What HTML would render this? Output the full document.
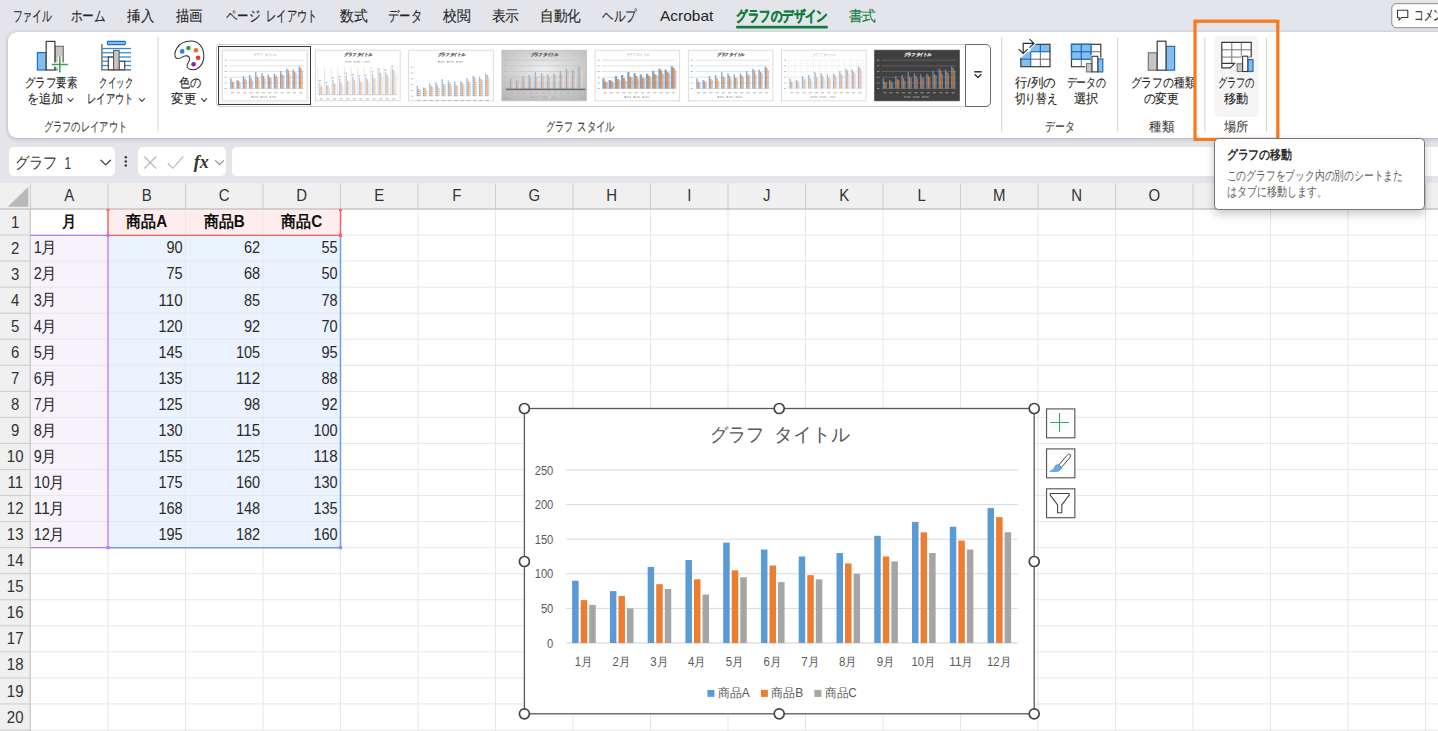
<!DOCTYPE html>
<html lang="ja">
<head>
<meta charset="utf-8">
<title>Excel - グラフの移動</title>
<style>
html,body{margin:0;padding:0;}
body{width:1438px;height:731px;overflow:hidden;background:#fff;font-family:"Liberation Sans",sans-serif;color:#242424;}
#app{position:relative;width:1438px;height:731px;overflow:hidden;background:#fff;}
.abs{position:absolute;}
#topbg{left:0;top:0;width:1438px;height:183px;background:#e4e5ea;}
#ribbon{left:8.3px;top:31.8px;width:1460px;height:106.2px;background:#fff;border-radius:9px;box-shadow:0 1px 4px rgba(0,0,0,0.22),0 0 1px rgba(0,0,0,0.12);}
.fbox{top:146.8px;height:28.8px;background:#fff;border-radius:5px;}
#namebox{left:8.9px;width:105.9px;}
#fbtns{left:137.7px;width:88.4px;}
#finput{left:232px;width:1230px;}
#gallery{left:216.4px;top:44.4px;width:749px;height:62.5px;background:#fff;border:1px solid #cfcfcf;border-right:none;border-radius:4px 0 0 4px;box-sizing:border-box;}
#galsel{left:218.3px;top:46.3px;width:93px;height:58.6px;box-sizing:border-box;border:1.4px solid #3a3a3a;background:#f7f7f7;}
#galbtn{left:965.4px;top:44.4px;width:25.5px;height:62.7px;box-sizing:border-box;border:1px solid #6a6a6a;border-radius:0 5px 5px 0;background:#fff;}
svg{position:absolute;left:0;top:0;overflow:hidden;}
svg text{font-family:"Liberation Sans",sans-serif;}
#tip{left:1214.1px;top:138.0px;width:211.1px;height:71.7px;box-sizing:border-box;background:#fff;border:1px solid #757575;border-radius:4.5px;box-shadow:0 4px 10px rgba(0,0,0,0.22);}
</style>
</head>
<body>
<div id="app">
<div id="topbg" class="abs"></div>
<div id="ribbon" class="abs"></div>
<div id="gallery" class="abs"></div>
<div id="galsel" class="abs"></div>
<div id="galbtn" class="abs"></div>
<div id="namebox" class="abs fbox"></div>
<div id="fbtns" class="abs fbox"></div>
<div id="finput" class="abs fbox"></div>
<svg id="gal" width="1438" height="731" viewBox="0 0 1438 731">
<defs><radialGradient id="g4" cx="50%" cy="38%" r="78%"><stop offset="0" stop-color="#f0f0f0"/><stop offset="1" stop-color="#b2b2b2"/></radialGradient></defs>
<rect x="222.3" y="50.2" width="84.6" height="50.6" fill="#fff" stroke="#d4d4d4" stroke-width="0.8"/>
<text x="253.1" y="55.6" font-size="3.4" fill="#8c8c8c" font-style="italic" textLength="23" lengthAdjust="spacingAndGlyphs" opacity="0.9">グラフ タイトル</text>
<line x1="229.3" y1="88.6" x2="303.9" y2="88.6" stroke="#d6d6d6" stroke-width="0.7"/>
<line x1="229.3" y1="82.92" x2="303.9" y2="82.92" stroke="#d6d6d6" stroke-width="0.7"/>
<line x1="229.3" y1="77.24" x2="303.9" y2="77.24" stroke="#d6d6d6" stroke-width="0.7"/>
<line x1="229.3" y1="71.56" x2="303.9" y2="71.56" stroke="#d6d6d6" stroke-width="0.7"/>
<line x1="229.3" y1="65.88" x2="303.9" y2="65.88" stroke="#d6d6d6" stroke-width="0.7"/>
<line x1="229.3" y1="60.2" x2="303.9" y2="60.2" stroke="#d6d6d6" stroke-width="0.7"/>
<rect x="230.28" y="78.38" width="1.35" height="10.22" fill="#5b9bd5" opacity="0.85"/>
<rect x="231.73" y="81.56" width="1.35" height="7.04" fill="#ed7d31" opacity="0.85"/>
<rect x="233.18" y="82.35" width="1.35" height="6.25" fill="#a5a5a5" opacity="0.6"/>
<rect x="236.5" y="80.08" width="1.35" height="8.52" fill="#5b9bd5" opacity="0.85"/>
<rect x="237.95" y="80.88" width="1.35" height="7.72" fill="#ed7d31" opacity="0.85"/>
<rect x="239.4" y="82.92" width="1.35" height="5.68" fill="#a5a5a5" opacity="0.6"/>
<rect x="242.72" y="76.1" width="1.35" height="12.5" fill="#5b9bd5" opacity="0.85"/>
<rect x="244.17" y="78.94" width="1.35" height="9.66" fill="#ed7d31" opacity="0.85"/>
<rect x="245.62" y="79.74" width="1.35" height="8.86" fill="#a5a5a5" opacity="0.6"/>
<rect x="248.93" y="74.97" width="1.35" height="13.63" fill="#5b9bd5" opacity="0.85"/>
<rect x="250.38" y="78.15" width="1.35" height="10.45" fill="#ed7d31" opacity="0.85"/>
<rect x="251.83" y="80.65" width="1.35" height="7.95" fill="#a5a5a5" opacity="0.6"/>
<rect x="255.15" y="72.13" width="1.35" height="16.47" fill="#5b9bd5" opacity="0.85"/>
<rect x="256.6" y="76.67" width="1.35" height="11.93" fill="#ed7d31" opacity="0.85"/>
<rect x="258.05" y="77.81" width="1.35" height="10.79" fill="#a5a5a5" opacity="0.6"/>
<rect x="261.37" y="73.26" width="1.35" height="15.34" fill="#5b9bd5" opacity="0.85"/>
<rect x="262.82" y="75.88" width="1.35" height="12.72" fill="#ed7d31" opacity="0.85"/>
<rect x="264.27" y="78.6" width="1.35" height="10" fill="#a5a5a5" opacity="0.6"/>
<rect x="267.58" y="74.4" width="1.35" height="14.2" fill="#5b9bd5" opacity="0.85"/>
<rect x="269.03" y="77.47" width="1.35" height="11.13" fill="#ed7d31" opacity="0.85"/>
<rect x="270.48" y="78.15" width="1.35" height="10.45" fill="#a5a5a5" opacity="0.6"/>
<rect x="273.8" y="73.83" width="1.35" height="14.77" fill="#5b9bd5" opacity="0.85"/>
<rect x="275.25" y="75.54" width="1.35" height="13.06" fill="#ed7d31" opacity="0.85"/>
<rect x="276.7" y="77.24" width="1.35" height="11.36" fill="#a5a5a5" opacity="0.6"/>
<rect x="280.02" y="70.99" width="1.35" height="17.61" fill="#5b9bd5" opacity="0.85"/>
<rect x="281.47" y="74.4" width="1.35" height="14.2" fill="#ed7d31" opacity="0.85"/>
<rect x="282.92" y="75.2" width="1.35" height="13.4" fill="#a5a5a5" opacity="0.6"/>
<rect x="286.23" y="68.72" width="1.35" height="19.88" fill="#5b9bd5" opacity="0.85"/>
<rect x="287.68" y="70.42" width="1.35" height="18.18" fill="#ed7d31" opacity="0.85"/>
<rect x="289.13" y="73.83" width="1.35" height="14.77" fill="#a5a5a5" opacity="0.6"/>
<rect x="292.45" y="69.52" width="1.35" height="19.08" fill="#5b9bd5" opacity="0.85"/>
<rect x="293.9" y="71.79" width="1.35" height="16.81" fill="#ed7d31" opacity="0.85"/>
<rect x="295.35" y="73.26" width="1.35" height="15.34" fill="#a5a5a5" opacity="0.6"/>
<rect x="298.67" y="66.45" width="1.35" height="22.15" fill="#5b9bd5" opacity="0.85"/>
<rect x="300.12" y="67.92" width="1.35" height="20.68" fill="#ed7d31" opacity="0.85"/>
<rect x="301.57" y="70.42" width="1.35" height="18.18" fill="#a5a5a5" opacity="0.6"/>
<rect x="230.91" y="92.3" width="3" height="1" fill="#b5b5b5"/>
<rect x="237.12" y="92.3" width="3" height="1" fill="#b5b5b5"/>
<rect x="243.34" y="92.3" width="3" height="1" fill="#b5b5b5"/>
<rect x="249.56" y="92.3" width="3" height="1" fill="#b5b5b5"/>
<rect x="255.77" y="92.3" width="3" height="1" fill="#b5b5b5"/>
<rect x="261.99" y="92.3" width="3" height="1" fill="#b5b5b5"/>
<rect x="268.21" y="92.3" width="3" height="1" fill="#b5b5b5"/>
<rect x="274.43" y="92.3" width="3" height="1" fill="#b5b5b5"/>
<rect x="280.64" y="92.3" width="3" height="1" fill="#b5b5b5"/>
<rect x="286.86" y="92.3" width="3" height="1" fill="#b5b5b5"/>
<rect x="293.07" y="92.3" width="3" height="1" fill="#b5b5b5"/>
<rect x="299.29" y="92.3" width="3" height="1" fill="#b5b5b5"/>
<rect x="224.5" y="88.2" width="2.6" height="0.8" fill="#b5b5b5"/>
<rect x="224.5" y="82.52" width="2.6" height="0.8" fill="#b5b5b5"/>
<rect x="224.5" y="76.84" width="2.6" height="0.8" fill="#b5b5b5"/>
<rect x="224.5" y="71.16" width="2.6" height="0.8" fill="#b5b5b5"/>
<rect x="224.5" y="65.48" width="2.6" height="0.8" fill="#b5b5b5"/>
<rect x="224.5" y="59.8" width="2.6" height="0.8" fill="#b5b5b5"/>
<rect x="251.6" y="96.3" width="1.6" height="1.4" fill="#5b9bd5"/>
<rect x="253.8" y="96.5" width="4.6" height="1" fill="#b5b5b5"/>
<rect x="260.6" y="96.3" width="1.6" height="1.4" fill="#ed7d31"/>
<rect x="262.8" y="96.5" width="4.6" height="1" fill="#b5b5b5"/>
<rect x="269.6" y="96.3" width="1.6" height="1.4" fill="#a5a5a5"/>
<rect x="271.8" y="96.5" width="4.6" height="1" fill="#b5b5b5"/>
<rect x="315.5" y="50.2" width="84.6" height="50.6" fill="#fff" stroke="#d4d4d4" stroke-width="0.8"/>
<text x="344.3" y="56.1" font-size="4.4" fill="#5a5a5a" font-weight="bold" stroke="#5a5a5a" stroke-width="0.12" font-style="italic" textLength="27" lengthAdjust="spacingAndGlyphs" opacity="0.9">グラフ タイトル</text>
<line x1="318" y1="67.2" x2="318" y2="94.7" stroke="#d9d9d9" stroke-width="0.6"/>
<line x1="324.59" y1="67.2" x2="324.59" y2="94.7" stroke="#d9d9d9" stroke-width="0.6"/>
<line x1="331.18" y1="67.2" x2="331.18" y2="94.7" stroke="#d9d9d9" stroke-width="0.6"/>
<line x1="337.77" y1="67.2" x2="337.77" y2="94.7" stroke="#d9d9d9" stroke-width="0.6"/>
<line x1="344.37" y1="67.2" x2="344.37" y2="94.7" stroke="#d9d9d9" stroke-width="0.6"/>
<line x1="350.96" y1="67.2" x2="350.96" y2="94.7" stroke="#d9d9d9" stroke-width="0.6"/>
<line x1="357.55" y1="67.2" x2="357.55" y2="94.7" stroke="#d9d9d9" stroke-width="0.6"/>
<line x1="364.14" y1="67.2" x2="364.14" y2="94.7" stroke="#d9d9d9" stroke-width="0.6"/>
<line x1="370.73" y1="67.2" x2="370.73" y2="94.7" stroke="#d9d9d9" stroke-width="0.6"/>
<line x1="377.33" y1="67.2" x2="377.33" y2="94.7" stroke="#d9d9d9" stroke-width="0.6"/>
<line x1="383.92" y1="67.2" x2="383.92" y2="94.7" stroke="#d9d9d9" stroke-width="0.6"/>
<line x1="390.51" y1="67.2" x2="390.51" y2="94.7" stroke="#d9d9d9" stroke-width="0.6"/>
<line x1="397.1" y1="67.2" x2="397.1" y2="94.7" stroke="#d9d9d9" stroke-width="0.6"/>
<line x1="318" y1="94.7" x2="397.1" y2="94.7" stroke="#bdbdbd" stroke-width="0.7"/>
<rect x="319.17" y="82.63" width="1.35" height="12.07" fill="#9dc3e6" opacity="0.85"/>
<rect x="318.57" y="80.03" width="2.2" height="1.2" fill="#a0a0a0" opacity="0.7"/>
<rect x="320.62" y="86.38" width="1.35" height="8.32" fill="#f4b183" opacity="0.85"/>
<rect x="322.07" y="87.32" width="1.35" height="7.38" fill="#dbdbdb" opacity="0.6"/>
<rect x="325.76" y="84.64" width="1.35" height="10.06" fill="#9dc3e6" opacity="0.85"/>
<rect x="325.16" y="82.04" width="2.2" height="1.2" fill="#a0a0a0" opacity="0.7"/>
<rect x="327.21" y="85.58" width="1.35" height="9.12" fill="#f4b183" opacity="0.85"/>
<rect x="328.66" y="87.99" width="1.35" height="6.71" fill="#dbdbdb" opacity="0.6"/>
<rect x="332.35" y="79.94" width="1.35" height="14.76" fill="#9dc3e6" opacity="0.85"/>
<rect x="331.75" y="77.34" width="2.2" height="1.2" fill="#a0a0a0" opacity="0.7"/>
<rect x="333.8" y="83.3" width="1.35" height="11.4" fill="#f4b183" opacity="0.85"/>
<rect x="335.25" y="84.24" width="1.35" height="10.46" fill="#dbdbdb" opacity="0.6"/>
<rect x="338.95" y="78.6" width="1.35" height="16.1" fill="#9dc3e6" opacity="0.85"/>
<rect x="338.35" y="76" width="2.2" height="1.2" fill="#a0a0a0" opacity="0.7"/>
<rect x="340.4" y="82.36" width="1.35" height="12.34" fill="#f4b183" opacity="0.85"/>
<rect x="341.85" y="85.31" width="1.35" height="9.39" fill="#dbdbdb" opacity="0.6"/>
<rect x="345.54" y="75.25" width="1.35" height="19.45" fill="#9dc3e6" opacity="0.85"/>
<rect x="344.94" y="72.65" width="2.2" height="1.2" fill="#a0a0a0" opacity="0.7"/>
<rect x="346.99" y="80.61" width="1.35" height="14.09" fill="#f4b183" opacity="0.85"/>
<rect x="348.44" y="81.96" width="1.35" height="12.74" fill="#dbdbdb" opacity="0.6"/>
<rect x="352.13" y="76.59" width="1.35" height="18.11" fill="#9dc3e6" opacity="0.85"/>
<rect x="351.53" y="73.99" width="2.2" height="1.2" fill="#a0a0a0" opacity="0.7"/>
<rect x="353.58" y="79.68" width="1.35" height="15.02" fill="#f4b183" opacity="0.85"/>
<rect x="355.03" y="82.9" width="1.35" height="11.8" fill="#dbdbdb" opacity="0.6"/>
<rect x="358.72" y="77.93" width="1.35" height="16.77" fill="#9dc3e6" opacity="0.85"/>
<rect x="358.12" y="75.33" width="2.2" height="1.2" fill="#a0a0a0" opacity="0.7"/>
<rect x="360.17" y="81.55" width="1.35" height="13.15" fill="#f4b183" opacity="0.85"/>
<rect x="361.62" y="82.36" width="1.35" height="12.34" fill="#dbdbdb" opacity="0.6"/>
<rect x="365.31" y="77.26" width="1.35" height="17.44" fill="#9dc3e6" opacity="0.85"/>
<rect x="364.71" y="74.66" width="2.2" height="1.2" fill="#a0a0a0" opacity="0.7"/>
<rect x="366.76" y="79.27" width="1.35" height="15.43" fill="#f4b183" opacity="0.85"/>
<rect x="368.21" y="81.29" width="1.35" height="13.41" fill="#dbdbdb" opacity="0.6"/>
<rect x="371.9" y="73.91" width="1.35" height="20.79" fill="#9dc3e6" opacity="0.85"/>
<rect x="371.3" y="71.31" width="2.2" height="1.2" fill="#a0a0a0" opacity="0.7"/>
<rect x="373.35" y="77.93" width="1.35" height="16.77" fill="#f4b183" opacity="0.85"/>
<rect x="374.8" y="78.87" width="1.35" height="15.83" fill="#dbdbdb" opacity="0.6"/>
<rect x="378.5" y="71.22" width="1.35" height="23.48" fill="#9dc3e6" opacity="0.85"/>
<rect x="377.9" y="68.62" width="2.2" height="1.2" fill="#a0a0a0" opacity="0.7"/>
<rect x="379.95" y="73.24" width="1.35" height="21.46" fill="#f4b183" opacity="0.85"/>
<rect x="381.4" y="77.26" width="1.35" height="17.44" fill="#dbdbdb" opacity="0.6"/>
<rect x="385.09" y="72.16" width="1.35" height="22.54" fill="#9dc3e6" opacity="0.85"/>
<rect x="384.49" y="69.56" width="2.2" height="1.2" fill="#a0a0a0" opacity="0.7"/>
<rect x="386.54" y="74.85" width="1.35" height="19.85" fill="#f4b183" opacity="0.85"/>
<rect x="387.99" y="76.59" width="1.35" height="18.11" fill="#dbdbdb" opacity="0.6"/>
<rect x="391.68" y="68.54" width="1.35" height="26.16" fill="#9dc3e6" opacity="0.85"/>
<rect x="391.08" y="65.94" width="2.2" height="1.2" fill="#a0a0a0" opacity="0.7"/>
<rect x="393.13" y="70.29" width="1.35" height="24.41" fill="#f4b183" opacity="0.85"/>
<rect x="394.58" y="73.24" width="1.35" height="21.46" fill="#dbdbdb" opacity="0.6"/>
<rect x="319.8" y="98.4" width="3" height="1" fill="#b5b5b5"/>
<rect x="326.39" y="98.4" width="3" height="1" fill="#b5b5b5"/>
<rect x="332.98" y="98.4" width="3" height="1" fill="#b5b5b5"/>
<rect x="339.57" y="98.4" width="3" height="1" fill="#b5b5b5"/>
<rect x="346.16" y="98.4" width="3" height="1" fill="#b5b5b5"/>
<rect x="352.75" y="98.4" width="3" height="1" fill="#b5b5b5"/>
<rect x="359.35" y="98.4" width="3" height="1" fill="#b5b5b5"/>
<rect x="365.94" y="98.4" width="3" height="1" fill="#b5b5b5"/>
<rect x="372.53" y="98.4" width="3" height="1" fill="#b5b5b5"/>
<rect x="379.12" y="98.4" width="3" height="1" fill="#b5b5b5"/>
<rect x="385.71" y="98.4" width="3" height="1" fill="#b5b5b5"/>
<rect x="392.3" y="98.4" width="3" height="1" fill="#b5b5b5"/>
<rect x="344.8" y="61.1" width="1.6" height="1.4" fill="#9dc3e6"/>
<rect x="347" y="61.3" width="4.6" height="1" fill="#b5b5b5"/>
<rect x="353.8" y="61.1" width="1.6" height="1.4" fill="#f4b183"/>
<rect x="356" y="61.3" width="4.6" height="1" fill="#b5b5b5"/>
<rect x="362.8" y="61.1" width="1.6" height="1.4" fill="#dbdbdb"/>
<rect x="365" y="61.3" width="4.6" height="1" fill="#b5b5b5"/>
<rect x="408.7" y="50.2" width="84.6" height="50.6" fill="#fff" stroke="#d4d4d4" stroke-width="0.8"/>
<text x="437.5" y="56.1" font-size="4.4" fill="#5a5a5a" font-weight="bold" stroke="#5a5a5a" stroke-width="0.12" font-style="italic" textLength="27" lengthAdjust="spacingAndGlyphs" opacity="0.9">グラフ タイトル</text>
<rect x="416.68" y="85.76" width="1.35" height="10.44" fill="#5b9bd5" opacity="0.85"/>
<line x1="416.58" y1="94.6" x2="418.13" y2="94.6" stroke="#fff" stroke-width="0.55"/>
<line x1="416.58" y1="92.4" x2="418.13" y2="92.4" stroke="#fff" stroke-width="0.55"/>
<line x1="416.58" y1="90.2" x2="418.13" y2="90.2" stroke="#fff" stroke-width="0.55"/>
<line x1="416.58" y1="88" x2="418.13" y2="88" stroke="#fff" stroke-width="0.55"/>
<line x1="416.58" y1="85.8" x2="418.13" y2="85.8" stroke="#fff" stroke-width="0.55"/>
<rect x="418.13" y="89.01" width="1.35" height="7.19" fill="#ed7d31" opacity="0.85"/>
<line x1="418.03" y1="94.6" x2="419.58" y2="94.6" stroke="#fff" stroke-width="0.55"/>
<line x1="418.03" y1="92.4" x2="419.58" y2="92.4" stroke="#fff" stroke-width="0.55"/>
<line x1="418.03" y1="90.2" x2="419.58" y2="90.2" stroke="#fff" stroke-width="0.55"/>
<rect x="419.58" y="89.82" width="1.35" height="6.38" fill="#a5a5a5" opacity="0.6"/>
<line x1="419.48" y1="94.6" x2="421.03" y2="94.6" stroke="#fff" stroke-width="0.55"/>
<line x1="419.48" y1="92.4" x2="421.03" y2="92.4" stroke="#fff" stroke-width="0.55"/>
<line x1="419.48" y1="90.2" x2="421.03" y2="90.2" stroke="#fff" stroke-width="0.55"/>
<rect x="422.9" y="87.5" width="1.35" height="8.7" fill="#5b9bd5" opacity="0.85"/>
<line x1="422.8" y1="94.6" x2="424.35" y2="94.6" stroke="#fff" stroke-width="0.55"/>
<line x1="422.8" y1="92.4" x2="424.35" y2="92.4" stroke="#fff" stroke-width="0.55"/>
<line x1="422.8" y1="90.2" x2="424.35" y2="90.2" stroke="#fff" stroke-width="0.55"/>
<line x1="422.8" y1="88" x2="424.35" y2="88" stroke="#fff" stroke-width="0.55"/>
<rect x="424.35" y="88.31" width="1.35" height="7.89" fill="#ed7d31" opacity="0.85"/>
<line x1="424.25" y1="94.6" x2="425.8" y2="94.6" stroke="#fff" stroke-width="0.55"/>
<line x1="424.25" y1="92.4" x2="425.8" y2="92.4" stroke="#fff" stroke-width="0.55"/>
<line x1="424.25" y1="90.2" x2="425.8" y2="90.2" stroke="#fff" stroke-width="0.55"/>
<rect x="425.8" y="90.4" width="1.35" height="5.8" fill="#a5a5a5" opacity="0.6"/>
<line x1="425.7" y1="94.6" x2="427.25" y2="94.6" stroke="#fff" stroke-width="0.55"/>
<line x1="425.7" y1="92.4" x2="427.25" y2="92.4" stroke="#fff" stroke-width="0.55"/>
<rect x="429.12" y="83.44" width="1.35" height="12.76" fill="#5b9bd5" opacity="0.85"/>
<line x1="429.02" y1="94.6" x2="430.57" y2="94.6" stroke="#fff" stroke-width="0.55"/>
<line x1="429.02" y1="92.4" x2="430.57" y2="92.4" stroke="#fff" stroke-width="0.55"/>
<line x1="429.02" y1="90.2" x2="430.57" y2="90.2" stroke="#fff" stroke-width="0.55"/>
<line x1="429.02" y1="88" x2="430.57" y2="88" stroke="#fff" stroke-width="0.55"/>
<line x1="429.02" y1="85.8" x2="430.57" y2="85.8" stroke="#fff" stroke-width="0.55"/>
<line x1="429.02" y1="83.6" x2="430.57" y2="83.6" stroke="#fff" stroke-width="0.55"/>
<rect x="430.57" y="86.34" width="1.35" height="9.86" fill="#ed7d31" opacity="0.85"/>
<line x1="430.47" y1="94.6" x2="432.02" y2="94.6" stroke="#fff" stroke-width="0.55"/>
<line x1="430.47" y1="92.4" x2="432.02" y2="92.4" stroke="#fff" stroke-width="0.55"/>
<line x1="430.47" y1="90.2" x2="432.02" y2="90.2" stroke="#fff" stroke-width="0.55"/>
<line x1="430.47" y1="88" x2="432.02" y2="88" stroke="#fff" stroke-width="0.55"/>
<rect x="432.02" y="87.15" width="1.35" height="9.05" fill="#a5a5a5" opacity="0.6"/>
<line x1="431.92" y1="94.6" x2="433.47" y2="94.6" stroke="#fff" stroke-width="0.55"/>
<line x1="431.92" y1="92.4" x2="433.47" y2="92.4" stroke="#fff" stroke-width="0.55"/>
<line x1="431.92" y1="90.2" x2="433.47" y2="90.2" stroke="#fff" stroke-width="0.55"/>
<line x1="431.92" y1="88" x2="433.47" y2="88" stroke="#fff" stroke-width="0.55"/>
<rect x="435.33" y="82.28" width="1.35" height="13.92" fill="#5b9bd5" opacity="0.85"/>
<line x1="435.23" y1="94.6" x2="436.78" y2="94.6" stroke="#fff" stroke-width="0.55"/>
<line x1="435.23" y1="92.4" x2="436.78" y2="92.4" stroke="#fff" stroke-width="0.55"/>
<line x1="435.23" y1="90.2" x2="436.78" y2="90.2" stroke="#fff" stroke-width="0.55"/>
<line x1="435.23" y1="88" x2="436.78" y2="88" stroke="#fff" stroke-width="0.55"/>
<line x1="435.23" y1="85.8" x2="436.78" y2="85.8" stroke="#fff" stroke-width="0.55"/>
<line x1="435.23" y1="83.6" x2="436.78" y2="83.6" stroke="#fff" stroke-width="0.55"/>
<rect x="436.78" y="85.53" width="1.35" height="10.67" fill="#ed7d31" opacity="0.85"/>
<line x1="436.68" y1="94.6" x2="438.23" y2="94.6" stroke="#fff" stroke-width="0.55"/>
<line x1="436.68" y1="92.4" x2="438.23" y2="92.4" stroke="#fff" stroke-width="0.55"/>
<line x1="436.68" y1="90.2" x2="438.23" y2="90.2" stroke="#fff" stroke-width="0.55"/>
<line x1="436.68" y1="88" x2="438.23" y2="88" stroke="#fff" stroke-width="0.55"/>
<line x1="436.68" y1="85.8" x2="438.23" y2="85.8" stroke="#fff" stroke-width="0.55"/>
<rect x="438.23" y="88.08" width="1.35" height="8.12" fill="#a5a5a5" opacity="0.6"/>
<line x1="438.13" y1="94.6" x2="439.68" y2="94.6" stroke="#fff" stroke-width="0.55"/>
<line x1="438.13" y1="92.4" x2="439.68" y2="92.4" stroke="#fff" stroke-width="0.55"/>
<line x1="438.13" y1="90.2" x2="439.68" y2="90.2" stroke="#fff" stroke-width="0.55"/>
<rect x="441.55" y="79.38" width="1.35" height="16.82" fill="#5b9bd5" opacity="0.85"/>
<line x1="441.45" y1="94.6" x2="443" y2="94.6" stroke="#fff" stroke-width="0.55"/>
<line x1="441.45" y1="92.4" x2="443" y2="92.4" stroke="#fff" stroke-width="0.55"/>
<line x1="441.45" y1="90.2" x2="443" y2="90.2" stroke="#fff" stroke-width="0.55"/>
<line x1="441.45" y1="88" x2="443" y2="88" stroke="#fff" stroke-width="0.55"/>
<line x1="441.45" y1="85.8" x2="443" y2="85.8" stroke="#fff" stroke-width="0.55"/>
<line x1="441.45" y1="83.6" x2="443" y2="83.6" stroke="#fff" stroke-width="0.55"/>
<line x1="441.45" y1="81.4" x2="443" y2="81.4" stroke="#fff" stroke-width="0.55"/>
<rect x="443" y="84.02" width="1.35" height="12.18" fill="#ed7d31" opacity="0.85"/>
<line x1="442.9" y1="94.6" x2="444.45" y2="94.6" stroke="#fff" stroke-width="0.55"/>
<line x1="442.9" y1="92.4" x2="444.45" y2="92.4" stroke="#fff" stroke-width="0.55"/>
<line x1="442.9" y1="90.2" x2="444.45" y2="90.2" stroke="#fff" stroke-width="0.55"/>
<line x1="442.9" y1="88" x2="444.45" y2="88" stroke="#fff" stroke-width="0.55"/>
<line x1="442.9" y1="85.8" x2="444.45" y2="85.8" stroke="#fff" stroke-width="0.55"/>
<rect x="444.45" y="85.18" width="1.35" height="11.02" fill="#a5a5a5" opacity="0.6"/>
<line x1="444.35" y1="94.6" x2="445.9" y2="94.6" stroke="#fff" stroke-width="0.55"/>
<line x1="444.35" y1="92.4" x2="445.9" y2="92.4" stroke="#fff" stroke-width="0.55"/>
<line x1="444.35" y1="90.2" x2="445.9" y2="90.2" stroke="#fff" stroke-width="0.55"/>
<line x1="444.35" y1="88" x2="445.9" y2="88" stroke="#fff" stroke-width="0.55"/>
<line x1="444.35" y1="85.8" x2="445.9" y2="85.8" stroke="#fff" stroke-width="0.55"/>
<rect x="447.77" y="80.54" width="1.35" height="15.66" fill="#5b9bd5" opacity="0.85"/>
<line x1="447.67" y1="94.6" x2="449.22" y2="94.6" stroke="#fff" stroke-width="0.55"/>
<line x1="447.67" y1="92.4" x2="449.22" y2="92.4" stroke="#fff" stroke-width="0.55"/>
<line x1="447.67" y1="90.2" x2="449.22" y2="90.2" stroke="#fff" stroke-width="0.55"/>
<line x1="447.67" y1="88" x2="449.22" y2="88" stroke="#fff" stroke-width="0.55"/>
<line x1="447.67" y1="85.8" x2="449.22" y2="85.8" stroke="#fff" stroke-width="0.55"/>
<line x1="447.67" y1="83.6" x2="449.22" y2="83.6" stroke="#fff" stroke-width="0.55"/>
<line x1="447.67" y1="81.4" x2="449.22" y2="81.4" stroke="#fff" stroke-width="0.55"/>
<rect x="449.22" y="83.21" width="1.35" height="12.99" fill="#ed7d31" opacity="0.85"/>
<line x1="449.12" y1="94.6" x2="450.67" y2="94.6" stroke="#fff" stroke-width="0.55"/>
<line x1="449.12" y1="92.4" x2="450.67" y2="92.4" stroke="#fff" stroke-width="0.55"/>
<line x1="449.12" y1="90.2" x2="450.67" y2="90.2" stroke="#fff" stroke-width="0.55"/>
<line x1="449.12" y1="88" x2="450.67" y2="88" stroke="#fff" stroke-width="0.55"/>
<line x1="449.12" y1="85.8" x2="450.67" y2="85.8" stroke="#fff" stroke-width="0.55"/>
<line x1="449.12" y1="83.6" x2="450.67" y2="83.6" stroke="#fff" stroke-width="0.55"/>
<rect x="450.67" y="85.99" width="1.35" height="10.21" fill="#a5a5a5" opacity="0.6"/>
<line x1="450.57" y1="94.6" x2="452.12" y2="94.6" stroke="#fff" stroke-width="0.55"/>
<line x1="450.57" y1="92.4" x2="452.12" y2="92.4" stroke="#fff" stroke-width="0.55"/>
<line x1="450.57" y1="90.2" x2="452.12" y2="90.2" stroke="#fff" stroke-width="0.55"/>
<line x1="450.57" y1="88" x2="452.12" y2="88" stroke="#fff" stroke-width="0.55"/>
<rect x="453.98" y="81.7" width="1.35" height="14.5" fill="#5b9bd5" opacity="0.85"/>
<line x1="453.88" y1="94.6" x2="455.43" y2="94.6" stroke="#fff" stroke-width="0.55"/>
<line x1="453.88" y1="92.4" x2="455.43" y2="92.4" stroke="#fff" stroke-width="0.55"/>
<line x1="453.88" y1="90.2" x2="455.43" y2="90.2" stroke="#fff" stroke-width="0.55"/>
<line x1="453.88" y1="88" x2="455.43" y2="88" stroke="#fff" stroke-width="0.55"/>
<line x1="453.88" y1="85.8" x2="455.43" y2="85.8" stroke="#fff" stroke-width="0.55"/>
<line x1="453.88" y1="83.6" x2="455.43" y2="83.6" stroke="#fff" stroke-width="0.55"/>
<rect x="455.43" y="84.83" width="1.35" height="11.37" fill="#ed7d31" opacity="0.85"/>
<line x1="455.33" y1="94.6" x2="456.88" y2="94.6" stroke="#fff" stroke-width="0.55"/>
<line x1="455.33" y1="92.4" x2="456.88" y2="92.4" stroke="#fff" stroke-width="0.55"/>
<line x1="455.33" y1="90.2" x2="456.88" y2="90.2" stroke="#fff" stroke-width="0.55"/>
<line x1="455.33" y1="88" x2="456.88" y2="88" stroke="#fff" stroke-width="0.55"/>
<line x1="455.33" y1="85.8" x2="456.88" y2="85.8" stroke="#fff" stroke-width="0.55"/>
<rect x="456.88" y="85.53" width="1.35" height="10.67" fill="#a5a5a5" opacity="0.6"/>
<line x1="456.78" y1="94.6" x2="458.33" y2="94.6" stroke="#fff" stroke-width="0.55"/>
<line x1="456.78" y1="92.4" x2="458.33" y2="92.4" stroke="#fff" stroke-width="0.55"/>
<line x1="456.78" y1="90.2" x2="458.33" y2="90.2" stroke="#fff" stroke-width="0.55"/>
<line x1="456.78" y1="88" x2="458.33" y2="88" stroke="#fff" stroke-width="0.55"/>
<line x1="456.78" y1="85.8" x2="458.33" y2="85.8" stroke="#fff" stroke-width="0.55"/>
<rect x="460.2" y="81.12" width="1.35" height="15.08" fill="#5b9bd5" opacity="0.85"/>
<line x1="460.1" y1="94.6" x2="461.65" y2="94.6" stroke="#fff" stroke-width="0.55"/>
<line x1="460.1" y1="92.4" x2="461.65" y2="92.4" stroke="#fff" stroke-width="0.55"/>
<line x1="460.1" y1="90.2" x2="461.65" y2="90.2" stroke="#fff" stroke-width="0.55"/>
<line x1="460.1" y1="88" x2="461.65" y2="88" stroke="#fff" stroke-width="0.55"/>
<line x1="460.1" y1="85.8" x2="461.65" y2="85.8" stroke="#fff" stroke-width="0.55"/>
<line x1="460.1" y1="83.6" x2="461.65" y2="83.6" stroke="#fff" stroke-width="0.55"/>
<line x1="460.1" y1="81.4" x2="461.65" y2="81.4" stroke="#fff" stroke-width="0.55"/>
<rect x="461.65" y="82.86" width="1.35" height="13.34" fill="#ed7d31" opacity="0.85"/>
<line x1="461.55" y1="94.6" x2="463.1" y2="94.6" stroke="#fff" stroke-width="0.55"/>
<line x1="461.55" y1="92.4" x2="463.1" y2="92.4" stroke="#fff" stroke-width="0.55"/>
<line x1="461.55" y1="90.2" x2="463.1" y2="90.2" stroke="#fff" stroke-width="0.55"/>
<line x1="461.55" y1="88" x2="463.1" y2="88" stroke="#fff" stroke-width="0.55"/>
<line x1="461.55" y1="85.8" x2="463.1" y2="85.8" stroke="#fff" stroke-width="0.55"/>
<line x1="461.55" y1="83.6" x2="463.1" y2="83.6" stroke="#fff" stroke-width="0.55"/>
<rect x="463.1" y="84.6" width="1.35" height="11.6" fill="#a5a5a5" opacity="0.6"/>
<line x1="463" y1="94.6" x2="464.55" y2="94.6" stroke="#fff" stroke-width="0.55"/>
<line x1="463" y1="92.4" x2="464.55" y2="92.4" stroke="#fff" stroke-width="0.55"/>
<line x1="463" y1="90.2" x2="464.55" y2="90.2" stroke="#fff" stroke-width="0.55"/>
<line x1="463" y1="88" x2="464.55" y2="88" stroke="#fff" stroke-width="0.55"/>
<line x1="463" y1="85.8" x2="464.55" y2="85.8" stroke="#fff" stroke-width="0.55"/>
<rect x="466.42" y="78.22" width="1.35" height="17.98" fill="#5b9bd5" opacity="0.85"/>
<line x1="466.32" y1="94.6" x2="467.87" y2="94.6" stroke="#fff" stroke-width="0.55"/>
<line x1="466.32" y1="92.4" x2="467.87" y2="92.4" stroke="#fff" stroke-width="0.55"/>
<line x1="466.32" y1="90.2" x2="467.87" y2="90.2" stroke="#fff" stroke-width="0.55"/>
<line x1="466.32" y1="88" x2="467.87" y2="88" stroke="#fff" stroke-width="0.55"/>
<line x1="466.32" y1="85.8" x2="467.87" y2="85.8" stroke="#fff" stroke-width="0.55"/>
<line x1="466.32" y1="83.6" x2="467.87" y2="83.6" stroke="#fff" stroke-width="0.55"/>
<line x1="466.32" y1="81.4" x2="467.87" y2="81.4" stroke="#fff" stroke-width="0.55"/>
<line x1="466.32" y1="79.2" x2="467.87" y2="79.2" stroke="#fff" stroke-width="0.55"/>
<rect x="467.87" y="81.7" width="1.35" height="14.5" fill="#ed7d31" opacity="0.85"/>
<line x1="467.77" y1="94.6" x2="469.32" y2="94.6" stroke="#fff" stroke-width="0.55"/>
<line x1="467.77" y1="92.4" x2="469.32" y2="92.4" stroke="#fff" stroke-width="0.55"/>
<line x1="467.77" y1="90.2" x2="469.32" y2="90.2" stroke="#fff" stroke-width="0.55"/>
<line x1="467.77" y1="88" x2="469.32" y2="88" stroke="#fff" stroke-width="0.55"/>
<line x1="467.77" y1="85.8" x2="469.32" y2="85.8" stroke="#fff" stroke-width="0.55"/>
<line x1="467.77" y1="83.6" x2="469.32" y2="83.6" stroke="#fff" stroke-width="0.55"/>
<rect x="469.32" y="82.51" width="1.35" height="13.69" fill="#a5a5a5" opacity="0.6"/>
<line x1="469.22" y1="94.6" x2="470.77" y2="94.6" stroke="#fff" stroke-width="0.55"/>
<line x1="469.22" y1="92.4" x2="470.77" y2="92.4" stroke="#fff" stroke-width="0.55"/>
<line x1="469.22" y1="90.2" x2="470.77" y2="90.2" stroke="#fff" stroke-width="0.55"/>
<line x1="469.22" y1="88" x2="470.77" y2="88" stroke="#fff" stroke-width="0.55"/>
<line x1="469.22" y1="85.8" x2="470.77" y2="85.8" stroke="#fff" stroke-width="0.55"/>
<line x1="469.22" y1="83.6" x2="470.77" y2="83.6" stroke="#fff" stroke-width="0.55"/>
<rect x="472.63" y="75.9" width="1.35" height="20.3" fill="#5b9bd5" opacity="0.85"/>
<line x1="472.53" y1="94.6" x2="474.08" y2="94.6" stroke="#fff" stroke-width="0.55"/>
<line x1="472.53" y1="92.4" x2="474.08" y2="92.4" stroke="#fff" stroke-width="0.55"/>
<line x1="472.53" y1="90.2" x2="474.08" y2="90.2" stroke="#fff" stroke-width="0.55"/>
<line x1="472.53" y1="88" x2="474.08" y2="88" stroke="#fff" stroke-width="0.55"/>
<line x1="472.53" y1="85.8" x2="474.08" y2="85.8" stroke="#fff" stroke-width="0.55"/>
<line x1="472.53" y1="83.6" x2="474.08" y2="83.6" stroke="#fff" stroke-width="0.55"/>
<line x1="472.53" y1="81.4" x2="474.08" y2="81.4" stroke="#fff" stroke-width="0.55"/>
<line x1="472.53" y1="79.2" x2="474.08" y2="79.2" stroke="#fff" stroke-width="0.55"/>
<line x1="472.53" y1="77" x2="474.08" y2="77" stroke="#fff" stroke-width="0.55"/>
<rect x="474.08" y="77.64" width="1.35" height="18.56" fill="#ed7d31" opacity="0.85"/>
<line x1="473.98" y1="94.6" x2="475.53" y2="94.6" stroke="#fff" stroke-width="0.55"/>
<line x1="473.98" y1="92.4" x2="475.53" y2="92.4" stroke="#fff" stroke-width="0.55"/>
<line x1="473.98" y1="90.2" x2="475.53" y2="90.2" stroke="#fff" stroke-width="0.55"/>
<line x1="473.98" y1="88" x2="475.53" y2="88" stroke="#fff" stroke-width="0.55"/>
<line x1="473.98" y1="85.8" x2="475.53" y2="85.8" stroke="#fff" stroke-width="0.55"/>
<line x1="473.98" y1="83.6" x2="475.53" y2="83.6" stroke="#fff" stroke-width="0.55"/>
<line x1="473.98" y1="81.4" x2="475.53" y2="81.4" stroke="#fff" stroke-width="0.55"/>
<line x1="473.98" y1="79.2" x2="475.53" y2="79.2" stroke="#fff" stroke-width="0.55"/>
<rect x="475.53" y="81.12" width="1.35" height="15.08" fill="#a5a5a5" opacity="0.6"/>
<line x1="475.43" y1="94.6" x2="476.98" y2="94.6" stroke="#fff" stroke-width="0.55"/>
<line x1="475.43" y1="92.4" x2="476.98" y2="92.4" stroke="#fff" stroke-width="0.55"/>
<line x1="475.43" y1="90.2" x2="476.98" y2="90.2" stroke="#fff" stroke-width="0.55"/>
<line x1="475.43" y1="88" x2="476.98" y2="88" stroke="#fff" stroke-width="0.55"/>
<line x1="475.43" y1="85.8" x2="476.98" y2="85.8" stroke="#fff" stroke-width="0.55"/>
<line x1="475.43" y1="83.6" x2="476.98" y2="83.6" stroke="#fff" stroke-width="0.55"/>
<line x1="475.43" y1="81.4" x2="476.98" y2="81.4" stroke="#fff" stroke-width="0.55"/>
<rect x="478.85" y="76.71" width="1.35" height="19.49" fill="#5b9bd5" opacity="0.85"/>
<line x1="478.75" y1="94.6" x2="480.3" y2="94.6" stroke="#fff" stroke-width="0.55"/>
<line x1="478.75" y1="92.4" x2="480.3" y2="92.4" stroke="#fff" stroke-width="0.55"/>
<line x1="478.75" y1="90.2" x2="480.3" y2="90.2" stroke="#fff" stroke-width="0.55"/>
<line x1="478.75" y1="88" x2="480.3" y2="88" stroke="#fff" stroke-width="0.55"/>
<line x1="478.75" y1="85.8" x2="480.3" y2="85.8" stroke="#fff" stroke-width="0.55"/>
<line x1="478.75" y1="83.6" x2="480.3" y2="83.6" stroke="#fff" stroke-width="0.55"/>
<line x1="478.75" y1="81.4" x2="480.3" y2="81.4" stroke="#fff" stroke-width="0.55"/>
<line x1="478.75" y1="79.2" x2="480.3" y2="79.2" stroke="#fff" stroke-width="0.55"/>
<line x1="478.75" y1="77" x2="480.3" y2="77" stroke="#fff" stroke-width="0.55"/>
<rect x="480.3" y="79.03" width="1.35" height="17.17" fill="#ed7d31" opacity="0.85"/>
<line x1="480.2" y1="94.6" x2="481.75" y2="94.6" stroke="#fff" stroke-width="0.55"/>
<line x1="480.2" y1="92.4" x2="481.75" y2="92.4" stroke="#fff" stroke-width="0.55"/>
<line x1="480.2" y1="90.2" x2="481.75" y2="90.2" stroke="#fff" stroke-width="0.55"/>
<line x1="480.2" y1="88" x2="481.75" y2="88" stroke="#fff" stroke-width="0.55"/>
<line x1="480.2" y1="85.8" x2="481.75" y2="85.8" stroke="#fff" stroke-width="0.55"/>
<line x1="480.2" y1="83.6" x2="481.75" y2="83.6" stroke="#fff" stroke-width="0.55"/>
<line x1="480.2" y1="81.4" x2="481.75" y2="81.4" stroke="#fff" stroke-width="0.55"/>
<line x1="480.2" y1="79.2" x2="481.75" y2="79.2" stroke="#fff" stroke-width="0.55"/>
<rect x="481.75" y="80.54" width="1.35" height="15.66" fill="#a5a5a5" opacity="0.6"/>
<line x1="481.65" y1="94.6" x2="483.2" y2="94.6" stroke="#fff" stroke-width="0.55"/>
<line x1="481.65" y1="92.4" x2="483.2" y2="92.4" stroke="#fff" stroke-width="0.55"/>
<line x1="481.65" y1="90.2" x2="483.2" y2="90.2" stroke="#fff" stroke-width="0.55"/>
<line x1="481.65" y1="88" x2="483.2" y2="88" stroke="#fff" stroke-width="0.55"/>
<line x1="481.65" y1="85.8" x2="483.2" y2="85.8" stroke="#fff" stroke-width="0.55"/>
<line x1="481.65" y1="83.6" x2="483.2" y2="83.6" stroke="#fff" stroke-width="0.55"/>
<line x1="481.65" y1="81.4" x2="483.2" y2="81.4" stroke="#fff" stroke-width="0.55"/>
<rect x="485.07" y="73.58" width="1.35" height="22.62" fill="#5b9bd5" opacity="0.85"/>
<line x1="484.97" y1="94.6" x2="486.52" y2="94.6" stroke="#fff" stroke-width="0.55"/>
<line x1="484.97" y1="92.4" x2="486.52" y2="92.4" stroke="#fff" stroke-width="0.55"/>
<line x1="484.97" y1="90.2" x2="486.52" y2="90.2" stroke="#fff" stroke-width="0.55"/>
<line x1="484.97" y1="88" x2="486.52" y2="88" stroke="#fff" stroke-width="0.55"/>
<line x1="484.97" y1="85.8" x2="486.52" y2="85.8" stroke="#fff" stroke-width="0.55"/>
<line x1="484.97" y1="83.6" x2="486.52" y2="83.6" stroke="#fff" stroke-width="0.55"/>
<line x1="484.97" y1="81.4" x2="486.52" y2="81.4" stroke="#fff" stroke-width="0.55"/>
<line x1="484.97" y1="79.2" x2="486.52" y2="79.2" stroke="#fff" stroke-width="0.55"/>
<line x1="484.97" y1="77" x2="486.52" y2="77" stroke="#fff" stroke-width="0.55"/>
<line x1="484.97" y1="74.8" x2="486.52" y2="74.8" stroke="#fff" stroke-width="0.55"/>
<rect x="486.52" y="75.09" width="1.35" height="21.11" fill="#ed7d31" opacity="0.85"/>
<line x1="486.42" y1="94.6" x2="487.97" y2="94.6" stroke="#fff" stroke-width="0.55"/>
<line x1="486.42" y1="92.4" x2="487.97" y2="92.4" stroke="#fff" stroke-width="0.55"/>
<line x1="486.42" y1="90.2" x2="487.97" y2="90.2" stroke="#fff" stroke-width="0.55"/>
<line x1="486.42" y1="88" x2="487.97" y2="88" stroke="#fff" stroke-width="0.55"/>
<line x1="486.42" y1="85.8" x2="487.97" y2="85.8" stroke="#fff" stroke-width="0.55"/>
<line x1="486.42" y1="83.6" x2="487.97" y2="83.6" stroke="#fff" stroke-width="0.55"/>
<line x1="486.42" y1="81.4" x2="487.97" y2="81.4" stroke="#fff" stroke-width="0.55"/>
<line x1="486.42" y1="79.2" x2="487.97" y2="79.2" stroke="#fff" stroke-width="0.55"/>
<line x1="486.42" y1="77" x2="487.97" y2="77" stroke="#fff" stroke-width="0.55"/>
<rect x="487.97" y="77.64" width="1.35" height="18.56" fill="#a5a5a5" opacity="0.6"/>
<line x1="487.87" y1="94.6" x2="489.42" y2="94.6" stroke="#fff" stroke-width="0.55"/>
<line x1="487.87" y1="92.4" x2="489.42" y2="92.4" stroke="#fff" stroke-width="0.55"/>
<line x1="487.87" y1="90.2" x2="489.42" y2="90.2" stroke="#fff" stroke-width="0.55"/>
<line x1="487.87" y1="88" x2="489.42" y2="88" stroke="#fff" stroke-width="0.55"/>
<line x1="487.87" y1="85.8" x2="489.42" y2="85.8" stroke="#fff" stroke-width="0.55"/>
<line x1="487.87" y1="83.6" x2="489.42" y2="83.6" stroke="#fff" stroke-width="0.55"/>
<line x1="487.87" y1="81.4" x2="489.42" y2="81.4" stroke="#fff" stroke-width="0.55"/>
<line x1="487.87" y1="79.2" x2="489.42" y2="79.2" stroke="#fff" stroke-width="0.55"/>
<rect x="417.31" y="99.9" width="3" height="1" fill="#b5b5b5"/>
<rect x="423.53" y="99.9" width="3" height="1" fill="#b5b5b5"/>
<rect x="429.74" y="99.9" width="3" height="1" fill="#b5b5b5"/>
<rect x="435.96" y="99.9" width="3" height="1" fill="#b5b5b5"/>
<rect x="442.18" y="99.9" width="3" height="1" fill="#b5b5b5"/>
<rect x="448.39" y="99.9" width="3" height="1" fill="#b5b5b5"/>
<rect x="454.61" y="99.9" width="3" height="1" fill="#b5b5b5"/>
<rect x="460.83" y="99.9" width="3" height="1" fill="#b5b5b5"/>
<rect x="467.04" y="99.9" width="3" height="1" fill="#b5b5b5"/>
<rect x="473.26" y="99.9" width="3" height="1" fill="#b5b5b5"/>
<rect x="479.48" y="99.9" width="3" height="1" fill="#b5b5b5"/>
<rect x="485.69" y="99.9" width="3" height="1" fill="#b5b5b5"/>
<rect x="410.9" y="95.8" width="2.6" height="0.8" fill="#b5b5b5"/>
<rect x="410.9" y="90" width="2.6" height="0.8" fill="#b5b5b5"/>
<rect x="410.9" y="84.2" width="2.6" height="0.8" fill="#b5b5b5"/>
<rect x="410.9" y="78.4" width="2.6" height="0.8" fill="#b5b5b5"/>
<rect x="410.9" y="72.6" width="2.6" height="0.8" fill="#b5b5b5"/>
<rect x="410.9" y="66.8" width="2.6" height="0.8" fill="#b5b5b5"/>
<rect x="438" y="61.1" width="1.6" height="1.4" fill="#5b9bd5"/>
<rect x="440.2" y="61.3" width="4.6" height="1" fill="#b5b5b5"/>
<rect x="447" y="61.1" width="1.6" height="1.4" fill="#ed7d31"/>
<rect x="449.2" y="61.3" width="4.6" height="1" fill="#b5b5b5"/>
<rect x="456" y="61.1" width="1.6" height="1.4" fill="#a5a5a5"/>
<rect x="458.2" y="61.3" width="4.6" height="1" fill="#b5b5b5"/>
<rect x="501.9" y="50.2" width="84.6" height="50.6" fill="url(#g4)" stroke="#c0c0c0" stroke-width="0.8"/>
<text x="530.7" y="56.1" font-size="4.4" fill="#5a5a5a" font-weight="bold" stroke="#5a5a5a" stroke-width="0.12" font-style="italic" textLength="27" lengthAdjust="spacingAndGlyphs" opacity="0.9">グラフ タイトル</text>
<line x1="508.9" y1="88.6" x2="583.5" y2="88.6" stroke="#c6c6c6" stroke-width="0.7"/>
<line x1="508.9" y1="82.92" x2="583.5" y2="82.92" stroke="#c6c6c6" stroke-width="0.7"/>
<line x1="508.9" y1="77.24" x2="583.5" y2="77.24" stroke="#c6c6c6" stroke-width="0.7"/>
<line x1="508.9" y1="71.56" x2="583.5" y2="71.56" stroke="#c6c6c6" stroke-width="0.7"/>
<line x1="508.9" y1="65.88" x2="583.5" y2="65.88" stroke="#c6c6c6" stroke-width="0.7"/>
<line x1="508.9" y1="60.2" x2="583.5" y2="60.2" stroke="#c6c6c6" stroke-width="0.7"/>
<rect x="509.88" y="78.38" width="1.35" height="10.22" fill="#7fb0de" opacity="0.85"/>
<rect x="511.33" y="81.56" width="1.35" height="7.04" fill="#f4b183" opacity="0.85"/>
<rect x="512.78" y="82.35" width="1.35" height="6.25" fill="#e8e8e8" opacity="0.6"/>
<rect x="516.1" y="80.08" width="1.35" height="8.52" fill="#7fb0de" opacity="0.85"/>
<rect x="517.55" y="80.88" width="1.35" height="7.72" fill="#f4b183" opacity="0.85"/>
<rect x="519" y="82.92" width="1.35" height="5.68" fill="#e8e8e8" opacity="0.6"/>
<rect x="522.32" y="76.1" width="1.35" height="12.5" fill="#7fb0de" opacity="0.85"/>
<rect x="523.77" y="78.94" width="1.35" height="9.66" fill="#f4b183" opacity="0.85"/>
<rect x="525.22" y="79.74" width="1.35" height="8.86" fill="#e8e8e8" opacity="0.6"/>
<rect x="528.53" y="74.97" width="1.35" height="13.63" fill="#7fb0de" opacity="0.85"/>
<rect x="529.98" y="78.15" width="1.35" height="10.45" fill="#f4b183" opacity="0.85"/>
<rect x="531.43" y="80.65" width="1.35" height="7.95" fill="#e8e8e8" opacity="0.6"/>
<rect x="534.75" y="72.13" width="1.35" height="16.47" fill="#7fb0de" opacity="0.85"/>
<rect x="536.2" y="76.67" width="1.35" height="11.93" fill="#f4b183" opacity="0.85"/>
<rect x="537.65" y="77.81" width="1.35" height="10.79" fill="#e8e8e8" opacity="0.6"/>
<rect x="540.97" y="73.26" width="1.35" height="15.34" fill="#7fb0de" opacity="0.85"/>
<rect x="542.42" y="75.88" width="1.35" height="12.72" fill="#f4b183" opacity="0.85"/>
<rect x="543.87" y="78.6" width="1.35" height="10" fill="#e8e8e8" opacity="0.6"/>
<rect x="547.18" y="74.4" width="1.35" height="14.2" fill="#7fb0de" opacity="0.85"/>
<rect x="548.63" y="77.47" width="1.35" height="11.13" fill="#f4b183" opacity="0.85"/>
<rect x="550.08" y="78.15" width="1.35" height="10.45" fill="#e8e8e8" opacity="0.6"/>
<rect x="553.4" y="73.83" width="1.35" height="14.77" fill="#7fb0de" opacity="0.85"/>
<rect x="554.85" y="75.54" width="1.35" height="13.06" fill="#f4b183" opacity="0.85"/>
<rect x="556.3" y="77.24" width="1.35" height="11.36" fill="#e8e8e8" opacity="0.6"/>
<rect x="559.62" y="70.99" width="1.35" height="17.61" fill="#7fb0de" opacity="0.85"/>
<rect x="561.07" y="74.4" width="1.35" height="14.2" fill="#f4b183" opacity="0.85"/>
<rect x="562.52" y="75.2" width="1.35" height="13.4" fill="#e8e8e8" opacity="0.6"/>
<rect x="565.83" y="68.72" width="1.35" height="19.88" fill="#7fb0de" opacity="0.85"/>
<rect x="567.28" y="70.42" width="1.35" height="18.18" fill="#f4b183" opacity="0.85"/>
<rect x="568.73" y="73.83" width="1.35" height="14.77" fill="#e8e8e8" opacity="0.6"/>
<rect x="572.05" y="69.52" width="1.35" height="19.08" fill="#7fb0de" opacity="0.85"/>
<rect x="573.5" y="71.79" width="1.35" height="16.81" fill="#f4b183" opacity="0.85"/>
<rect x="574.95" y="73.26" width="1.35" height="15.34" fill="#e8e8e8" opacity="0.6"/>
<rect x="578.27" y="66.45" width="1.35" height="22.15" fill="#7fb0de" opacity="0.85"/>
<rect x="579.72" y="67.92" width="1.35" height="20.68" fill="#f4b183" opacity="0.85"/>
<rect x="581.17" y="70.42" width="1.35" height="18.18" fill="#e8e8e8" opacity="0.6"/>
<rect x="505.9" y="88.6" width="79.6" height="1.6" fill="#6b6b6b"/>
<rect x="510.51" y="92.3" width="3" height="1" fill="#b5b5b5"/>
<rect x="516.73" y="92.3" width="3" height="1" fill="#b5b5b5"/>
<rect x="522.94" y="92.3" width="3" height="1" fill="#b5b5b5"/>
<rect x="529.16" y="92.3" width="3" height="1" fill="#b5b5b5"/>
<rect x="535.38" y="92.3" width="3" height="1" fill="#b5b5b5"/>
<rect x="541.59" y="92.3" width="3" height="1" fill="#b5b5b5"/>
<rect x="547.81" y="92.3" width="3" height="1" fill="#b5b5b5"/>
<rect x="554.02" y="92.3" width="3" height="1" fill="#b5b5b5"/>
<rect x="560.24" y="92.3" width="3" height="1" fill="#b5b5b5"/>
<rect x="566.46" y="92.3" width="3" height="1" fill="#b5b5b5"/>
<rect x="572.67" y="92.3" width="3" height="1" fill="#b5b5b5"/>
<rect x="578.89" y="92.3" width="3" height="1" fill="#b5b5b5"/>
<rect x="504.1" y="88.2" width="2.6" height="0.8" fill="#b5b5b5"/>
<rect x="504.1" y="82.52" width="2.6" height="0.8" fill="#b5b5b5"/>
<rect x="504.1" y="76.84" width="2.6" height="0.8" fill="#b5b5b5"/>
<rect x="504.1" y="71.16" width="2.6" height="0.8" fill="#b5b5b5"/>
<rect x="504.1" y="65.48" width="2.6" height="0.8" fill="#b5b5b5"/>
<rect x="504.1" y="59.8" width="2.6" height="0.8" fill="#b5b5b5"/>
<rect x="531.2" y="96.3" width="1.6" height="1.4" fill="#7fb0de"/>
<rect x="533.4" y="96.5" width="4.6" height="1" fill="#b5b5b5"/>
<rect x="540.2" y="96.3" width="1.6" height="1.4" fill="#f4b183"/>
<rect x="542.4" y="96.5" width="4.6" height="1" fill="#b5b5b5"/>
<rect x="549.2" y="96.3" width="1.6" height="1.4" fill="#e8e8e8"/>
<rect x="551.4" y="96.5" width="4.6" height="1" fill="#b5b5b5"/>
<rect x="595.1" y="50.2" width="84.6" height="50.6" fill="#fff" stroke="#d4d4d4" stroke-width="0.8"/>
<text x="625.9" y="55.6" font-size="3.4" fill="#8c8c8c" font-style="italic" textLength="23" lengthAdjust="spacingAndGlyphs" opacity="0.9">グラフ タイトル</text>
<line x1="602.1" y1="88.6" x2="676.7" y2="88.6" stroke="#d6d6d6" stroke-width="0.7"/>
<line x1="602.1" y1="82.92" x2="676.7" y2="82.92" stroke="#d6d6d6" stroke-width="0.7"/>
<line x1="602.1" y1="77.24" x2="676.7" y2="77.24" stroke="#d6d6d6" stroke-width="0.7"/>
<line x1="602.1" y1="71.56" x2="676.7" y2="71.56" stroke="#d6d6d6" stroke-width="0.7"/>
<line x1="602.1" y1="65.88" x2="676.7" y2="65.88" stroke="#d6d6d6" stroke-width="0.7"/>
<line x1="602.1" y1="60.2" x2="676.7" y2="60.2" stroke="#d6d6d6" stroke-width="0.7"/>
<rect x="602.36" y="78.38" width="2.3" height="10.22" fill="#5b9bd5" opacity="0.85"/>
<rect x="604.06" y="81.56" width="2.3" height="7.04" fill="#ed7d31" opacity="0.85"/>
<rect x="605.76" y="82.35" width="2.3" height="6.25" fill="#a5a5a5" opacity="0.6"/>
<rect x="608.58" y="80.08" width="2.3" height="8.52" fill="#5b9bd5" opacity="0.85"/>
<rect x="610.28" y="80.88" width="2.3" height="7.72" fill="#ed7d31" opacity="0.85"/>
<rect x="611.98" y="82.92" width="2.3" height="5.68" fill="#a5a5a5" opacity="0.6"/>
<rect x="614.79" y="76.1" width="2.3" height="12.5" fill="#5b9bd5" opacity="0.85"/>
<rect x="616.49" y="78.94" width="2.3" height="9.66" fill="#ed7d31" opacity="0.85"/>
<rect x="618.19" y="79.74" width="2.3" height="8.86" fill="#a5a5a5" opacity="0.6"/>
<rect x="621.01" y="74.97" width="2.3" height="13.63" fill="#5b9bd5" opacity="0.85"/>
<rect x="622.71" y="78.15" width="2.3" height="10.45" fill="#ed7d31" opacity="0.85"/>
<rect x="624.41" y="80.65" width="2.3" height="7.95" fill="#a5a5a5" opacity="0.6"/>
<rect x="627.23" y="72.13" width="2.3" height="16.47" fill="#5b9bd5" opacity="0.85"/>
<rect x="628.93" y="76.67" width="2.3" height="11.93" fill="#ed7d31" opacity="0.85"/>
<rect x="630.62" y="77.81" width="2.3" height="10.79" fill="#a5a5a5" opacity="0.6"/>
<rect x="633.44" y="73.26" width="2.3" height="15.34" fill="#5b9bd5" opacity="0.85"/>
<rect x="635.14" y="75.88" width="2.3" height="12.72" fill="#ed7d31" opacity="0.85"/>
<rect x="636.84" y="78.6" width="2.3" height="10" fill="#a5a5a5" opacity="0.6"/>
<rect x="639.66" y="74.4" width="2.3" height="14.2" fill="#5b9bd5" opacity="0.85"/>
<rect x="641.36" y="77.47" width="2.3" height="11.13" fill="#ed7d31" opacity="0.85"/>
<rect x="643.06" y="78.15" width="2.3" height="10.45" fill="#a5a5a5" opacity="0.6"/>
<rect x="645.88" y="73.83" width="2.3" height="14.77" fill="#5b9bd5" opacity="0.85"/>
<rect x="647.58" y="75.54" width="2.3" height="13.06" fill="#ed7d31" opacity="0.85"/>
<rect x="649.27" y="77.24" width="2.3" height="11.36" fill="#a5a5a5" opacity="0.6"/>
<rect x="652.09" y="70.99" width="2.3" height="17.61" fill="#5b9bd5" opacity="0.85"/>
<rect x="653.79" y="74.4" width="2.3" height="14.2" fill="#ed7d31" opacity="0.85"/>
<rect x="655.49" y="75.2" width="2.3" height="13.4" fill="#a5a5a5" opacity="0.6"/>
<rect x="658.31" y="68.72" width="2.3" height="19.88" fill="#5b9bd5" opacity="0.85"/>
<rect x="660.01" y="70.42" width="2.3" height="18.18" fill="#ed7d31" opacity="0.85"/>
<rect x="661.71" y="73.83" width="2.3" height="14.77" fill="#a5a5a5" opacity="0.6"/>
<rect x="664.52" y="69.52" width="2.3" height="19.08" fill="#5b9bd5" opacity="0.85"/>
<rect x="666.23" y="71.79" width="2.3" height="16.81" fill="#ed7d31" opacity="0.85"/>
<rect x="667.92" y="73.26" width="2.3" height="15.34" fill="#a5a5a5" opacity="0.6"/>
<rect x="670.74" y="66.45" width="2.3" height="22.15" fill="#5b9bd5" opacity="0.85"/>
<rect x="672.44" y="67.92" width="2.3" height="20.68" fill="#ed7d31" opacity="0.85"/>
<rect x="674.14" y="70.42" width="2.3" height="18.18" fill="#a5a5a5" opacity="0.6"/>
<rect x="603.71" y="92.3" width="3" height="1" fill="#b5b5b5"/>
<rect x="609.93" y="92.3" width="3" height="1" fill="#b5b5b5"/>
<rect x="616.14" y="92.3" width="3" height="1" fill="#b5b5b5"/>
<rect x="622.36" y="92.3" width="3" height="1" fill="#b5b5b5"/>
<rect x="628.58" y="92.3" width="3" height="1" fill="#b5b5b5"/>
<rect x="634.79" y="92.3" width="3" height="1" fill="#b5b5b5"/>
<rect x="641.01" y="92.3" width="3" height="1" fill="#b5b5b5"/>
<rect x="647.23" y="92.3" width="3" height="1" fill="#b5b5b5"/>
<rect x="653.44" y="92.3" width="3" height="1" fill="#b5b5b5"/>
<rect x="659.66" y="92.3" width="3" height="1" fill="#b5b5b5"/>
<rect x="665.88" y="92.3" width="3" height="1" fill="#b5b5b5"/>
<rect x="672.09" y="92.3" width="3" height="1" fill="#b5b5b5"/>
<rect x="597.3" y="88.2" width="2.6" height="0.8" fill="#b5b5b5"/>
<rect x="597.3" y="82.52" width="2.6" height="0.8" fill="#b5b5b5"/>
<rect x="597.3" y="76.84" width="2.6" height="0.8" fill="#b5b5b5"/>
<rect x="597.3" y="71.16" width="2.6" height="0.8" fill="#b5b5b5"/>
<rect x="597.3" y="65.48" width="2.6" height="0.8" fill="#b5b5b5"/>
<rect x="597.3" y="59.8" width="2.6" height="0.8" fill="#b5b5b5"/>
<rect x="624.4" y="96.3" width="1.6" height="1.4" fill="#5b9bd5"/>
<rect x="626.6" y="96.5" width="4.6" height="1" fill="#b5b5b5"/>
<rect x="633.4" y="96.3" width="1.6" height="1.4" fill="#ed7d31"/>
<rect x="635.6" y="96.5" width="4.6" height="1" fill="#b5b5b5"/>
<rect x="642.4" y="96.3" width="1.6" height="1.4" fill="#a5a5a5"/>
<rect x="644.6" y="96.5" width="4.6" height="1" fill="#b5b5b5"/>
<rect x="688.3" y="50.2" width="84.6" height="50.6" fill="#fff" stroke="#d4d4d4" stroke-width="0.8"/>
<text x="717.1" y="56.1" font-size="4.4" fill="#5a5a5a" font-weight="bold" stroke="#5a5a5a" stroke-width="0.12" font-style="italic" textLength="27" lengthAdjust="spacingAndGlyphs" opacity="0.9">グラフ タイトル</text>
<line x1="695.3" y1="88.6" x2="769.9" y2="88.6" stroke="#c9d9ec" stroke-width="0.7"/>
<line x1="695.3" y1="82.92" x2="769.9" y2="82.92" stroke="#c9d9ec" stroke-width="0.7"/>
<line x1="695.3" y1="77.24" x2="769.9" y2="77.24" stroke="#c9d9ec" stroke-width="0.7"/>
<line x1="695.3" y1="71.56" x2="769.9" y2="71.56" stroke="#c9d9ec" stroke-width="0.7"/>
<line x1="695.3" y1="65.88" x2="769.9" y2="65.88" stroke="#c9d9ec" stroke-width="0.7"/>
<line x1="695.3" y1="60.2" x2="769.9" y2="60.2" stroke="#c9d9ec" stroke-width="0.7"/>
<rect x="696.28" y="78.38" width="1.35" height="10.22" fill="#5b9bd5" opacity="0.85"/>
<rect x="697.73" y="81.56" width="1.35" height="7.04" fill="#ed7d31" opacity="0.85"/>
<rect x="699.18" y="82.35" width="1.35" height="6.25" fill="#a5a5a5" opacity="0.6"/>
<rect x="702.5" y="80.08" width="1.35" height="8.52" fill="#5b9bd5" opacity="0.85"/>
<rect x="703.95" y="80.88" width="1.35" height="7.72" fill="#ed7d31" opacity="0.85"/>
<rect x="705.4" y="82.92" width="1.35" height="5.68" fill="#a5a5a5" opacity="0.6"/>
<rect x="708.72" y="76.1" width="1.35" height="12.5" fill="#5b9bd5" opacity="0.85"/>
<rect x="710.17" y="78.94" width="1.35" height="9.66" fill="#ed7d31" opacity="0.85"/>
<rect x="711.62" y="79.74" width="1.35" height="8.86" fill="#a5a5a5" opacity="0.6"/>
<rect x="714.93" y="74.97" width="1.35" height="13.63" fill="#5b9bd5" opacity="0.85"/>
<rect x="716.38" y="78.15" width="1.35" height="10.45" fill="#ed7d31" opacity="0.85"/>
<rect x="717.83" y="80.65" width="1.35" height="7.95" fill="#a5a5a5" opacity="0.6"/>
<rect x="721.15" y="72.13" width="1.35" height="16.47" fill="#5b9bd5" opacity="0.85"/>
<rect x="722.6" y="76.67" width="1.35" height="11.93" fill="#ed7d31" opacity="0.85"/>
<rect x="724.05" y="77.81" width="1.35" height="10.79" fill="#a5a5a5" opacity="0.6"/>
<rect x="727.37" y="73.26" width="1.35" height="15.34" fill="#5b9bd5" opacity="0.85"/>
<rect x="728.82" y="75.88" width="1.35" height="12.72" fill="#ed7d31" opacity="0.85"/>
<rect x="730.27" y="78.6" width="1.35" height="10" fill="#a5a5a5" opacity="0.6"/>
<rect x="733.58" y="74.4" width="1.35" height="14.2" fill="#5b9bd5" opacity="0.85"/>
<rect x="735.03" y="77.47" width="1.35" height="11.13" fill="#ed7d31" opacity="0.85"/>
<rect x="736.48" y="78.15" width="1.35" height="10.45" fill="#a5a5a5" opacity="0.6"/>
<rect x="739.8" y="73.83" width="1.35" height="14.77" fill="#5b9bd5" opacity="0.85"/>
<rect x="741.25" y="75.54" width="1.35" height="13.06" fill="#ed7d31" opacity="0.85"/>
<rect x="742.7" y="77.24" width="1.35" height="11.36" fill="#a5a5a5" opacity="0.6"/>
<rect x="746.02" y="70.99" width="1.35" height="17.61" fill="#5b9bd5" opacity="0.85"/>
<rect x="747.47" y="74.4" width="1.35" height="14.2" fill="#ed7d31" opacity="0.85"/>
<rect x="748.92" y="75.2" width="1.35" height="13.4" fill="#a5a5a5" opacity="0.6"/>
<rect x="752.23" y="68.72" width="1.35" height="19.88" fill="#5b9bd5" opacity="0.85"/>
<rect x="753.68" y="70.42" width="1.35" height="18.18" fill="#ed7d31" opacity="0.85"/>
<rect x="755.13" y="73.83" width="1.35" height="14.77" fill="#a5a5a5" opacity="0.6"/>
<rect x="758.45" y="69.52" width="1.35" height="19.08" fill="#5b9bd5" opacity="0.85"/>
<rect x="759.9" y="71.79" width="1.35" height="16.81" fill="#ed7d31" opacity="0.85"/>
<rect x="761.35" y="73.26" width="1.35" height="15.34" fill="#a5a5a5" opacity="0.6"/>
<rect x="764.67" y="66.45" width="1.35" height="22.15" fill="#5b9bd5" opacity="0.85"/>
<rect x="766.12" y="67.92" width="1.35" height="20.68" fill="#ed7d31" opacity="0.85"/>
<rect x="767.57" y="70.42" width="1.35" height="18.18" fill="#a5a5a5" opacity="0.6"/>
<rect x="696.91" y="92.3" width="3" height="1" fill="#b5b5b5"/>
<rect x="703.12" y="92.3" width="3" height="1" fill="#b5b5b5"/>
<rect x="709.34" y="92.3" width="3" height="1" fill="#b5b5b5"/>
<rect x="715.56" y="92.3" width="3" height="1" fill="#b5b5b5"/>
<rect x="721.77" y="92.3" width="3" height="1" fill="#b5b5b5"/>
<rect x="727.99" y="92.3" width="3" height="1" fill="#b5b5b5"/>
<rect x="734.21" y="92.3" width="3" height="1" fill="#b5b5b5"/>
<rect x="740.42" y="92.3" width="3" height="1" fill="#b5b5b5"/>
<rect x="746.64" y="92.3" width="3" height="1" fill="#b5b5b5"/>
<rect x="752.86" y="92.3" width="3" height="1" fill="#b5b5b5"/>
<rect x="759.07" y="92.3" width="3" height="1" fill="#b5b5b5"/>
<rect x="765.29" y="92.3" width="3" height="1" fill="#b5b5b5"/>
<rect x="690.5" y="88.2" width="2.6" height="0.8" fill="#b5b5b5"/>
<rect x="690.5" y="82.52" width="2.6" height="0.8" fill="#b5b5b5"/>
<rect x="690.5" y="76.84" width="2.6" height="0.8" fill="#b5b5b5"/>
<rect x="690.5" y="71.16" width="2.6" height="0.8" fill="#b5b5b5"/>
<rect x="690.5" y="65.48" width="2.6" height="0.8" fill="#b5b5b5"/>
<rect x="690.5" y="59.8" width="2.6" height="0.8" fill="#b5b5b5"/>
<rect x="717.6" y="96.3" width="1.6" height="1.4" fill="#5b9bd5"/>
<rect x="719.8" y="96.5" width="4.6" height="1" fill="#b5b5b5"/>
<rect x="726.6" y="96.3" width="1.6" height="1.4" fill="#ed7d31"/>
<rect x="728.8" y="96.5" width="4.6" height="1" fill="#b5b5b5"/>
<rect x="735.6" y="96.3" width="1.6" height="1.4" fill="#a5a5a5"/>
<rect x="737.8" y="96.5" width="4.6" height="1" fill="#b5b5b5"/>
<rect x="781.5" y="50.2" width="84.6" height="50.6" fill="#fff" stroke="#d4d4d4" stroke-width="0.8"/>
<text x="812.3" y="55.6" font-size="3.4" fill="#a0a0a0" font-style="italic" textLength="23" lengthAdjust="spacingAndGlyphs" opacity="0.9">グラフ タイトル</text>
<line x1="788.5" y1="88.6" x2="863.1" y2="88.6" stroke="#d0d0d0" stroke-width="0.6" stroke-dasharray="1.2 1.2"/>
<line x1="788.5" y1="82.92" x2="863.1" y2="82.92" stroke="#d0d0d0" stroke-width="0.6" stroke-dasharray="1.2 1.2"/>
<line x1="788.5" y1="77.24" x2="863.1" y2="77.24" stroke="#d0d0d0" stroke-width="0.6" stroke-dasharray="1.2 1.2"/>
<line x1="788.5" y1="71.56" x2="863.1" y2="71.56" stroke="#d0d0d0" stroke-width="0.6" stroke-dasharray="1.2 1.2"/>
<line x1="788.5" y1="65.88" x2="863.1" y2="65.88" stroke="#d0d0d0" stroke-width="0.6" stroke-dasharray="1.2 1.2"/>
<line x1="788.5" y1="60.2" x2="863.1" y2="60.2" stroke="#d0d0d0" stroke-width="0.6" stroke-dasharray="1.2 1.2"/>
<line x1="788.5" y1="60.2" x2="788.5" y2="88.6" stroke="#d8d8d8" stroke-width="0.6" stroke-dasharray="1.2 1.2"/>
<line x1="794.72" y1="60.2" x2="794.72" y2="88.6" stroke="#d8d8d8" stroke-width="0.6" stroke-dasharray="1.2 1.2"/>
<line x1="800.93" y1="60.2" x2="800.93" y2="88.6" stroke="#d8d8d8" stroke-width="0.6" stroke-dasharray="1.2 1.2"/>
<line x1="807.15" y1="60.2" x2="807.15" y2="88.6" stroke="#d8d8d8" stroke-width="0.6" stroke-dasharray="1.2 1.2"/>
<line x1="813.37" y1="60.2" x2="813.37" y2="88.6" stroke="#d8d8d8" stroke-width="0.6" stroke-dasharray="1.2 1.2"/>
<line x1="819.58" y1="60.2" x2="819.58" y2="88.6" stroke="#d8d8d8" stroke-width="0.6" stroke-dasharray="1.2 1.2"/>
<line x1="825.8" y1="60.2" x2="825.8" y2="88.6" stroke="#d8d8d8" stroke-width="0.6" stroke-dasharray="1.2 1.2"/>
<line x1="832.02" y1="60.2" x2="832.02" y2="88.6" stroke="#d8d8d8" stroke-width="0.6" stroke-dasharray="1.2 1.2"/>
<line x1="838.23" y1="60.2" x2="838.23" y2="88.6" stroke="#d8d8d8" stroke-width="0.6" stroke-dasharray="1.2 1.2"/>
<line x1="844.45" y1="60.2" x2="844.45" y2="88.6" stroke="#d8d8d8" stroke-width="0.6" stroke-dasharray="1.2 1.2"/>
<line x1="850.67" y1="60.2" x2="850.67" y2="88.6" stroke="#d8d8d8" stroke-width="0.6" stroke-dasharray="1.2 1.2"/>
<line x1="856.88" y1="60.2" x2="856.88" y2="88.6" stroke="#d8d8d8" stroke-width="0.6" stroke-dasharray="1.2 1.2"/>
<line x1="863.1" y1="60.2" x2="863.1" y2="88.6" stroke="#d8d8d8" stroke-width="0.6" stroke-dasharray="1.2 1.2"/>
<rect x="789.48" y="78.38" width="1.35" height="10.22" fill="#7fb0de" opacity="0.85"/>
<rect x="790.93" y="81.56" width="1.35" height="7.04" fill="#f2a36f" opacity="0.85"/>
<rect x="792.38" y="82.35" width="1.35" height="6.25" fill="#d0d0d0" opacity="0.6"/>
<rect x="795.7" y="80.08" width="1.35" height="8.52" fill="#7fb0de" opacity="0.85"/>
<rect x="797.15" y="80.88" width="1.35" height="7.72" fill="#f2a36f" opacity="0.85"/>
<rect x="798.6" y="82.92" width="1.35" height="5.68" fill="#d0d0d0" opacity="0.6"/>
<rect x="801.92" y="76.1" width="1.35" height="12.5" fill="#7fb0de" opacity="0.85"/>
<rect x="803.37" y="78.94" width="1.35" height="9.66" fill="#f2a36f" opacity="0.85"/>
<rect x="804.82" y="79.74" width="1.35" height="8.86" fill="#d0d0d0" opacity="0.6"/>
<rect x="808.13" y="74.97" width="1.35" height="13.63" fill="#7fb0de" opacity="0.85"/>
<rect x="809.58" y="78.15" width="1.35" height="10.45" fill="#f2a36f" opacity="0.85"/>
<rect x="811.03" y="80.65" width="1.35" height="7.95" fill="#d0d0d0" opacity="0.6"/>
<rect x="814.35" y="72.13" width="1.35" height="16.47" fill="#7fb0de" opacity="0.85"/>
<rect x="815.8" y="76.67" width="1.35" height="11.93" fill="#f2a36f" opacity="0.85"/>
<rect x="817.25" y="77.81" width="1.35" height="10.79" fill="#d0d0d0" opacity="0.6"/>
<rect x="820.57" y="73.26" width="1.35" height="15.34" fill="#7fb0de" opacity="0.85"/>
<rect x="822.02" y="75.88" width="1.35" height="12.72" fill="#f2a36f" opacity="0.85"/>
<rect x="823.47" y="78.6" width="1.35" height="10" fill="#d0d0d0" opacity="0.6"/>
<rect x="826.78" y="74.4" width="1.35" height="14.2" fill="#7fb0de" opacity="0.85"/>
<rect x="828.23" y="77.47" width="1.35" height="11.13" fill="#f2a36f" opacity="0.85"/>
<rect x="829.68" y="78.15" width="1.35" height="10.45" fill="#d0d0d0" opacity="0.6"/>
<rect x="833" y="73.83" width="1.35" height="14.77" fill="#7fb0de" opacity="0.85"/>
<rect x="834.45" y="75.54" width="1.35" height="13.06" fill="#f2a36f" opacity="0.85"/>
<rect x="835.9" y="77.24" width="1.35" height="11.36" fill="#d0d0d0" opacity="0.6"/>
<rect x="839.22" y="70.99" width="1.35" height="17.61" fill="#7fb0de" opacity="0.85"/>
<rect x="840.67" y="74.4" width="1.35" height="14.2" fill="#f2a36f" opacity="0.85"/>
<rect x="842.12" y="75.2" width="1.35" height="13.4" fill="#d0d0d0" opacity="0.6"/>
<rect x="845.43" y="68.72" width="1.35" height="19.88" fill="#7fb0de" opacity="0.85"/>
<rect x="846.88" y="70.42" width="1.35" height="18.18" fill="#f2a36f" opacity="0.85"/>
<rect x="848.33" y="73.83" width="1.35" height="14.77" fill="#d0d0d0" opacity="0.6"/>
<rect x="851.65" y="69.52" width="1.35" height="19.08" fill="#7fb0de" opacity="0.85"/>
<rect x="853.1" y="71.79" width="1.35" height="16.81" fill="#f2a36f" opacity="0.85"/>
<rect x="854.55" y="73.26" width="1.35" height="15.34" fill="#d0d0d0" opacity="0.6"/>
<rect x="857.87" y="66.45" width="1.35" height="22.15" fill="#7fb0de" opacity="0.85"/>
<rect x="859.32" y="67.92" width="1.35" height="20.68" fill="#f2a36f" opacity="0.85"/>
<rect x="860.77" y="70.42" width="1.35" height="18.18" fill="#d0d0d0" opacity="0.6"/>
<rect x="790.11" y="92.3" width="3" height="1" fill="#b5b5b5"/>
<rect x="796.33" y="92.3" width="3" height="1" fill="#b5b5b5"/>
<rect x="802.54" y="92.3" width="3" height="1" fill="#b5b5b5"/>
<rect x="808.76" y="92.3" width="3" height="1" fill="#b5b5b5"/>
<rect x="814.98" y="92.3" width="3" height="1" fill="#b5b5b5"/>
<rect x="821.19" y="92.3" width="3" height="1" fill="#b5b5b5"/>
<rect x="827.41" y="92.3" width="3" height="1" fill="#b5b5b5"/>
<rect x="833.62" y="92.3" width="3" height="1" fill="#b5b5b5"/>
<rect x="839.84" y="92.3" width="3" height="1" fill="#b5b5b5"/>
<rect x="846.06" y="92.3" width="3" height="1" fill="#b5b5b5"/>
<rect x="852.27" y="92.3" width="3" height="1" fill="#b5b5b5"/>
<rect x="858.49" y="92.3" width="3" height="1" fill="#b5b5b5"/>
<rect x="783.7" y="88.2" width="2.6" height="0.8" fill="#b5b5b5"/>
<rect x="783.7" y="82.52" width="2.6" height="0.8" fill="#b5b5b5"/>
<rect x="783.7" y="76.84" width="2.6" height="0.8" fill="#b5b5b5"/>
<rect x="783.7" y="71.16" width="2.6" height="0.8" fill="#b5b5b5"/>
<rect x="783.7" y="65.48" width="2.6" height="0.8" fill="#b5b5b5"/>
<rect x="783.7" y="59.8" width="2.6" height="0.8" fill="#b5b5b5"/>
<rect x="810.8" y="96.3" width="1.6" height="1.4" fill="#7fb0de"/>
<rect x="813" y="96.5" width="4.6" height="1" fill="#b5b5b5"/>
<rect x="819.8" y="96.3" width="1.6" height="1.4" fill="#f2a36f"/>
<rect x="822" y="96.5" width="4.6" height="1" fill="#b5b5b5"/>
<rect x="828.8" y="96.3" width="1.6" height="1.4" fill="#d0d0d0"/>
<rect x="831" y="96.5" width="4.6" height="1" fill="#b5b5b5"/>
<rect x="874.7" y="50.2" width="84.6" height="50.6" fill="#404040" stroke="#404040" stroke-width="0.8"/>
<text x="903.5" y="56.1" font-size="4.4" fill="#f0f0f0" font-weight="bold" stroke="#f0f0f0" stroke-width="0.12" font-style="italic" textLength="27" lengthAdjust="spacingAndGlyphs" opacity="0.9">グラフ タイトル</text>
<line x1="881.7" y1="88.6" x2="956.3" y2="88.6" stroke="#6a6a6a" stroke-width="0.7"/>
<line x1="881.7" y1="82.92" x2="956.3" y2="82.92" stroke="#6a6a6a" stroke-width="0.7"/>
<line x1="881.7" y1="77.24" x2="956.3" y2="77.24" stroke="#6a6a6a" stroke-width="0.7"/>
<line x1="881.7" y1="71.56" x2="956.3" y2="71.56" stroke="#6a6a6a" stroke-width="0.7"/>
<line x1="881.7" y1="65.88" x2="956.3" y2="65.88" stroke="#6a6a6a" stroke-width="0.7"/>
<line x1="881.7" y1="60.2" x2="956.3" y2="60.2" stroke="#6a6a6a" stroke-width="0.7"/>
<rect x="882.68" y="78.38" width="1.35" height="10.22" fill="#5b9bd5" opacity="0.85"/>
<rect x="884.13" y="81.56" width="1.35" height="7.04" fill="#ed7d31" opacity="0.85"/>
<rect x="885.58" y="82.35" width="1.35" height="6.25" fill="#a5a5a5" opacity="0.6"/>
<rect x="888.9" y="80.08" width="1.35" height="8.52" fill="#5b9bd5" opacity="0.85"/>
<rect x="890.35" y="80.88" width="1.35" height="7.72" fill="#ed7d31" opacity="0.85"/>
<rect x="891.8" y="82.92" width="1.35" height="5.68" fill="#a5a5a5" opacity="0.6"/>
<rect x="895.12" y="76.1" width="1.35" height="12.5" fill="#5b9bd5" opacity="0.85"/>
<rect x="896.57" y="78.94" width="1.35" height="9.66" fill="#ed7d31" opacity="0.85"/>
<rect x="898.02" y="79.74" width="1.35" height="8.86" fill="#a5a5a5" opacity="0.6"/>
<rect x="901.33" y="74.97" width="1.35" height="13.63" fill="#5b9bd5" opacity="0.85"/>
<rect x="902.78" y="78.15" width="1.35" height="10.45" fill="#ed7d31" opacity="0.85"/>
<rect x="904.23" y="80.65" width="1.35" height="7.95" fill="#a5a5a5" opacity="0.6"/>
<rect x="907.55" y="72.13" width="1.35" height="16.47" fill="#5b9bd5" opacity="0.85"/>
<rect x="909" y="76.67" width="1.35" height="11.93" fill="#ed7d31" opacity="0.85"/>
<rect x="910.45" y="77.81" width="1.35" height="10.79" fill="#a5a5a5" opacity="0.6"/>
<rect x="913.77" y="73.26" width="1.35" height="15.34" fill="#5b9bd5" opacity="0.85"/>
<rect x="915.22" y="75.88" width="1.35" height="12.72" fill="#ed7d31" opacity="0.85"/>
<rect x="916.67" y="78.6" width="1.35" height="10" fill="#a5a5a5" opacity="0.6"/>
<rect x="919.98" y="74.4" width="1.35" height="14.2" fill="#5b9bd5" opacity="0.85"/>
<rect x="921.43" y="77.47" width="1.35" height="11.13" fill="#ed7d31" opacity="0.85"/>
<rect x="922.88" y="78.15" width="1.35" height="10.45" fill="#a5a5a5" opacity="0.6"/>
<rect x="926.2" y="73.83" width="1.35" height="14.77" fill="#5b9bd5" opacity="0.85"/>
<rect x="927.65" y="75.54" width="1.35" height="13.06" fill="#ed7d31" opacity="0.85"/>
<rect x="929.1" y="77.24" width="1.35" height="11.36" fill="#a5a5a5" opacity="0.6"/>
<rect x="932.42" y="70.99" width="1.35" height="17.61" fill="#5b9bd5" opacity="0.85"/>
<rect x="933.87" y="74.4" width="1.35" height="14.2" fill="#ed7d31" opacity="0.85"/>
<rect x="935.32" y="75.2" width="1.35" height="13.4" fill="#a5a5a5" opacity="0.6"/>
<rect x="938.63" y="68.72" width="1.35" height="19.88" fill="#5b9bd5" opacity="0.85"/>
<rect x="940.08" y="70.42" width="1.35" height="18.18" fill="#ed7d31" opacity="0.85"/>
<rect x="941.53" y="73.83" width="1.35" height="14.77" fill="#a5a5a5" opacity="0.6"/>
<rect x="944.85" y="69.52" width="1.35" height="19.08" fill="#5b9bd5" opacity="0.85"/>
<rect x="946.3" y="71.79" width="1.35" height="16.81" fill="#ed7d31" opacity="0.85"/>
<rect x="947.75" y="73.26" width="1.35" height="15.34" fill="#a5a5a5" opacity="0.6"/>
<rect x="951.07" y="66.45" width="1.35" height="22.15" fill="#5b9bd5" opacity="0.85"/>
<rect x="952.52" y="67.92" width="1.35" height="20.68" fill="#ed7d31" opacity="0.85"/>
<rect x="953.97" y="70.42" width="1.35" height="18.18" fill="#a5a5a5" opacity="0.6"/>
<rect x="883.31" y="92.3" width="3" height="1" fill="#9a9a9a"/>
<rect x="889.53" y="92.3" width="3" height="1" fill="#9a9a9a"/>
<rect x="895.74" y="92.3" width="3" height="1" fill="#9a9a9a"/>
<rect x="901.96" y="92.3" width="3" height="1" fill="#9a9a9a"/>
<rect x="908.18" y="92.3" width="3" height="1" fill="#9a9a9a"/>
<rect x="914.39" y="92.3" width="3" height="1" fill="#9a9a9a"/>
<rect x="920.61" y="92.3" width="3" height="1" fill="#9a9a9a"/>
<rect x="926.83" y="92.3" width="3" height="1" fill="#9a9a9a"/>
<rect x="933.04" y="92.3" width="3" height="1" fill="#9a9a9a"/>
<rect x="939.26" y="92.3" width="3" height="1" fill="#9a9a9a"/>
<rect x="945.48" y="92.3" width="3" height="1" fill="#9a9a9a"/>
<rect x="951.69" y="92.3" width="3" height="1" fill="#9a9a9a"/>
<rect x="876.9" y="88.2" width="2.6" height="0.8" fill="#9a9a9a"/>
<rect x="876.9" y="82.52" width="2.6" height="0.8" fill="#9a9a9a"/>
<rect x="876.9" y="76.84" width="2.6" height="0.8" fill="#9a9a9a"/>
<rect x="876.9" y="71.16" width="2.6" height="0.8" fill="#9a9a9a"/>
<rect x="876.9" y="65.48" width="2.6" height="0.8" fill="#9a9a9a"/>
<rect x="876.9" y="59.8" width="2.6" height="0.8" fill="#9a9a9a"/>
<rect x="904" y="96.3" width="1.6" height="1.4" fill="#5b9bd5"/>
<rect x="906.2" y="96.5" width="4.6" height="1" fill="#9a9a9a"/>
<rect x="913" y="96.3" width="1.6" height="1.4" fill="#ed7d31"/>
<rect x="915.2" y="96.5" width="4.6" height="1" fill="#9a9a9a"/>
<rect x="922" y="96.3" width="1.6" height="1.4" fill="#a5a5a5"/>
<rect x="924.2" y="96.5" width="4.6" height="1" fill="#9a9a9a"/>
<path d="M974.2 71.8 H981.8" stroke="#333" stroke-width="1.5" fill="none"/>
<path d="M974.6 74.3 L978 77.5 L981.4 74.3" stroke="#333" stroke-width="1.3" fill="none"/>
</svg>
<svg id="main" width="1438" height="731" viewBox="0 0 1438 731">
<g id="tabs">
<text x="12.5" y="20.89" font-size="14.6" fill="#242424" textLength="39.5" lengthAdjust="spacingAndGlyphs" stroke="#242424" stroke-width="0.12">ファイル</text>
<text x="70.9" y="20.89" font-size="14.6" fill="#242424" textLength="34.8" lengthAdjust="spacingAndGlyphs" stroke="#242424" stroke-width="0.12">ホーム</text>
<text x="127" y="20.89" font-size="14.6" fill="#242424" textLength="27" lengthAdjust="spacingAndGlyphs" stroke="#242424" stroke-width="0.12">挿入</text>
<text x="176" y="20.89" font-size="14.6" fill="#242424" textLength="26.8" lengthAdjust="spacingAndGlyphs" stroke="#242424" stroke-width="0.12">描画</text>
<text x="226" y="20.89" font-size="14.6" fill="#242424" textLength="34.4" lengthAdjust="spacingAndGlyphs" stroke="#242424" stroke-width="0.12">ページ</text>
<text x="265.9" y="20.89" font-size="14.6" fill="#242424" textLength="51.6" lengthAdjust="spacingAndGlyphs" stroke="#242424" stroke-width="0.12">レイアウト</text>
<text x="340" y="20.89" font-size="14.6" fill="#242424" textLength="27.6" lengthAdjust="spacingAndGlyphs" stroke="#242424" stroke-width="0.12">数式</text>
<text x="388" y="20.89" font-size="14.6" fill="#242424" textLength="34" lengthAdjust="spacingAndGlyphs" stroke="#242424" stroke-width="0.12">データ</text>
<text x="443" y="20.89" font-size="14.6" fill="#242424" textLength="27.7" lengthAdjust="spacingAndGlyphs" stroke="#242424" stroke-width="0.12">校閲</text>
<text x="491.5" y="20.89" font-size="14.6" fill="#242424" textLength="27.5" lengthAdjust="spacingAndGlyphs" stroke="#242424" stroke-width="0.12">表示</text>
<text x="540" y="20.89" font-size="14.6" fill="#242424" textLength="41" lengthAdjust="spacingAndGlyphs" stroke="#242424" stroke-width="0.12">自動化</text>
<text x="602" y="20.89" font-size="14.6" fill="#242424" textLength="34.7" lengthAdjust="spacingAndGlyphs" stroke="#242424" stroke-width="0.12">ヘルプ</text>
<text x="660" y="20.89" font-size="14.6" fill="#242424" textLength="53.4" lengthAdjust="spacingAndGlyphs">Acrobat</text>
<text x="736.4" y="20.89" font-size="14.6" fill="#107c41" font-weight="bold" textLength="91.4" lengthAdjust="spacingAndGlyphs" stroke="#107c41" stroke-width="0.45">グラフのデザイン</text>
<text x="848.6" y="20.89" font-size="14.6" fill="#107c41" textLength="27.4" lengthAdjust="spacingAndGlyphs" stroke="#107c41" stroke-width="0.12">書式</text>
<rect x="736" y="25.8" width="92" height="2.8" fill="#107c41" rx="1.4"/>
</g>
<g id="comment">
<rect x="1391.8" y="3.7" width="60" height="24" fill="#fff" stroke="#8a8a8a" stroke-width="1" rx="4.5"/>
<path d="M1397.5 10.3 h10.3 v7.2 h-6.3 l-2.4 2.6 v-2.6 h-1.6 z" fill="none" stroke="#3b3b3b" stroke-width="1.1" stroke-linejoin="round"/>
<text x="1413.8" y="19.89" font-size="14.6" fill="#242424" textLength="39.2" lengthAdjust="spacingAndGlyphs" stroke="#242424" stroke-width="0.12">コメント</text>
</g>
<g id="icons" stroke-linejoin="miter">
<rect x="55" y="46.3" width="8.3" height="23.6" fill="#c8c6c4" stroke="#797775" stroke-width="1.2"/>
<rect x="37.4" y="52.6" width="8.8" height="17.4" fill="#83beec" stroke="#1e6fc4" stroke-width="1.2"/>
<rect x="46.2" y="41.4" width="8.7" height="28.6" fill="#fff" stroke="#3b3a39" stroke-width="1.2"/>
<path d="M51.7 64.6 H67.9 M59.8 56.6 V72.6" stroke="#fff" stroke-width="4.2" fill="none"/>
<rect x="60.5" y="65.4" width="4.6" height="6" fill="#fff"/>
<path d="M51.7 64.6 H67.9 M59.8 56.6 V72.6" stroke="#37a04c" stroke-width="1.5" fill="none"/>
<line x1="102.3" y1="48.5" x2="131" y2="48.5" stroke="#2b88d8" stroke-width="1.25"/>
<line x1="102.3" y1="52.75" x2="131" y2="52.75" stroke="#2b88d8" stroke-width="1.25"/>
<line x1="102.3" y1="57" x2="131" y2="57" stroke="#2b88d8" stroke-width="1.25"/>
<line x1="102.3" y1="61.25" x2="131" y2="61.25" stroke="#2b88d8" stroke-width="1.25"/>
<line x1="102.3" y1="65.5" x2="131" y2="65.5" stroke="#2b88d8" stroke-width="1.25"/>
<rect x="107.4" y="41.4" width="17.9" height="3.2" fill="#83beec" stroke="#1e6fc4" stroke-width="1.1" rx="0.5"/>
<rect x="108.3" y="57.1" width="5.3" height="12.7" fill="#fff" stroke="#3b3a39" stroke-width="1.1"/>
<rect x="119.1" y="61.3" width="5.6" height="8.5" fill="#fff" stroke="#3b3a39" stroke-width="1.1"/>
<rect x="113.6" y="50.4" width="5.5" height="19.4" fill="#c8c6c4" stroke="#605e5c" stroke-width="1.1"/>
<path d="M101.9 44 V69.9 H131" fill="none" stroke="#605e5c" stroke-width="1.3"/>
<g transform="translate(189.4 55.4) scale(0.955) translate(-189.4 -55.4)">
<path d="M191 40.4 C199.3 40.4 204.5 47.2 204.5 56 C204.5 64.4 199 70.4 193.4 70.4 C189.3 70.4 186.4 68.8 187 65.8 C187.6 62.8 190.6 61 189.6 58.2 C188.7 55.6 185.6 55.2 183 56.7 C180.2 58.4 177.6 59.6 175.6 58.2 C173.4 56.6 173.7 52.2 176.2 48 C179.2 43 184.6 40.4 191 40.4 Z" fill="#fff" stroke="#333" stroke-width="1.1"/>
</g>
<circle cx="182.2" cy="51.4" r="2.3" fill="#1b87e0"/>
<circle cx="188.4" cy="48" r="2.3" fill="#2ea04a"/>
<circle cx="195.9" cy="50.3" r="2.3" fill="#e8730c"/>
<circle cx="198.1" cy="57.7" r="2.3" fill="#ee3535"/>
<circle cx="193.6" cy="64.2" r="2.3" fill="#8a1fa8"/>
<rect x="1020.8" y="44.3" width="29.2" height="22.4" fill="#fff"/>
<rect x="1030.7" y="44.3" width="19.3" height="7.4" fill="#83beec"/>
<rect x="1020.8" y="51.7" width="9.9" height="15" fill="#83beec"/>
<line x1="1040.4" y1="51.7" x2="1040.4" y2="66.7" stroke="#797775" stroke-width="1.1"/>
<line x1="1030.7" y1="59.2" x2="1050" y2="59.2" stroke="#797775" stroke-width="1.1"/>
<line x1="1030.7" y1="51.7" x2="1050" y2="51.7" stroke="#1e6fc4" stroke-width="1.2"/>
<line x1="1030.7" y1="51.7" x2="1030.7" y2="66.7" stroke="#1e6fc4" stroke-width="1.2"/>
<line x1="1020.8" y1="59.2" x2="1030.7" y2="59.2" stroke="#1e6fc4" stroke-width="1.2"/>
<line x1="1040.4" y1="44.3" x2="1040.4" y2="51.7" stroke="#1e6fc4" stroke-width="1.2"/>
<rect x="1020.8" y="44.3" width="29.2" height="22.4" fill="none" stroke="#3b3a39" stroke-width="1.2"/>
<path d="M1018 58.6 L1018 42 L1037 42 Z" fill="#fff"/>
<path d="M1019.8 57.4 L1036.2 42.3" stroke="#fff" stroke-width="2.2"/>
<path d="M1023.2 53.3 V43.4 H1033.8 M1029.5 39.2 L1034 43.4 L1029.5 47.6 M1018.7 49.2 L1023.2 53.5 L1027.7 49.2" fill="none" stroke="#2b2b2b" stroke-width="1.15"/>
<rect x="1071.5" y="44.3" width="29.3" height="22.4" fill="#fff" stroke="#3b3a39" stroke-width="1.2"/>
<line x1="1081.3" y1="59.2" x2="1081.3" y2="66.7" stroke="#797775" stroke-width="1.1"/>
<line x1="1091" y1="44.3" x2="1091" y2="66.7" stroke="#797775" stroke-width="1.1"/>
<line x1="1091" y1="51.7" x2="1100.8" y2="51.7" stroke="#797775" stroke-width="1.1"/>
<line x1="1071.5" y1="59.2" x2="1100.8" y2="59.2" stroke="#797775" stroke-width="1.1"/>
<rect x="1071.5" y="44.3" width="19.5" height="14.9" fill="#83beec" stroke="#1e6fc4" stroke-width="1.3"/>
<line x1="1081.3" y1="44.3" x2="1081.3" y2="59.2" stroke="#1e6fc4" stroke-width="1.3"/>
<line x1="1071.5" y1="51.7" x2="1091" y2="51.7" stroke="#1e6fc4" stroke-width="1.3"/>
<path d="M1085.3 62.4 H1090.8 V55.1 H1099 V57.8 H1104 V73.1 H1085.3 Z" fill="#fff"/>
<rect x="1086.5" y="63.6" width="5.5" height="8.3" fill="#c8c6c4" stroke="#797775" stroke-width="1.1"/>
<rect x="1097.8" y="59" width="5" height="12.9" fill="#83beec" stroke="#1e6fc4" stroke-width="1.2"/>
<rect x="1092" y="56.3" width="5.8" height="15.6" fill="#fff" stroke="#3b3a39" stroke-width="1.1"/>
<rect x="1148.3" y="52.8" width="8.9" height="17.4" fill="#c8c6c4" stroke="#797775" stroke-width="1.2"/>
<rect x="1166" y="46.4" width="8.6" height="23.8" fill="#83beec" stroke="#1e6fc4" stroke-width="1.2"/>
<rect x="1157.2" y="41.2" width="8.8" height="29" fill="#fff" stroke="#3b3a39" stroke-width="1.2"/>
</g>
<line x1="158" y1="37.5" x2="158" y2="131.5" stroke="#d1d1d1" stroke-width="1"/>
<line x1="1001.7" y1="37.5" x2="1001.7" y2="131.5" stroke="#d1d1d1" stroke-width="1"/>
<line x1="1117.7" y1="37.5" x2="1117.7" y2="131.5" stroke="#d1d1d1" stroke-width="1"/>
<line x1="1204.9" y1="37.5" x2="1204.9" y2="131.5" stroke="#d1d1d1" stroke-width="1"/>
<line x1="1266.6" y1="37.5" x2="1266.6" y2="131.5" stroke="#d1d1d1" stroke-width="1"/>
<g id="rlabels">
<text x="24.6" y="87.22" font-size="13.3" fill="#242424" textLength="52.6" lengthAdjust="spacingAndGlyphs" stroke="#242424" stroke-width="0.12">グラフ要素</text>
<text x="27" y="103.22" font-size="13.3" fill="#242424" textLength="36.2" lengthAdjust="spacingAndGlyphs" stroke="#242424" stroke-width="0.12">を追加</text>
<path d="M68 98.6 L70.5 101.4 L73 98.6" fill="none" stroke="#444" stroke-width="1.1" stroke-linecap="round" stroke-linejoin="round"/>
<text x="99.3" y="87.22" font-size="13.3" fill="#242424" textLength="33.7" lengthAdjust="spacingAndGlyphs" stroke="#242424" stroke-width="0.12">クイック</text>
<text x="87" y="103.22" font-size="13.3" fill="#242424" textLength="46.8" lengthAdjust="spacingAndGlyphs" stroke="#242424" stroke-width="0.12">レイアウト</text>
<path d="M139.5 98.6 L142 101.4 L144.5 98.6" fill="none" stroke="#444" stroke-width="1.1" stroke-linecap="round" stroke-linejoin="round"/>
<text x="178.5" y="87.22" font-size="13.3" fill="#242424" textLength="22.4" lengthAdjust="spacingAndGlyphs" stroke="#242424" stroke-width="0.12">色の</text>
<text x="171.2" y="103.22" font-size="13.3" fill="#242424" textLength="25" lengthAdjust="spacingAndGlyphs" stroke="#242424" stroke-width="0.12">変更</text>
<path d="M201.7 98.6 L204.2 101.4 L206.7 98.6" fill="none" stroke="#444" stroke-width="1.1" stroke-linecap="round" stroke-linejoin="round"/>
<text x="43.5" y="130.74" font-size="13" fill="#3a3a3a" textLength="83.8" lengthAdjust="spacingAndGlyphs" stroke="#3a3a3a" stroke-width="0.1">グラフのレイアウト</text>
<text x="545.8" y="130.74" font-size="13" fill="#3a3a3a" textLength="27.4" lengthAdjust="spacingAndGlyphs" stroke="#3a3a3a" stroke-width="0.1">グラフ</text>
<text x="577.3" y="130.74" font-size="13" fill="#3a3a3a" textLength="37.5" lengthAdjust="spacingAndGlyphs" stroke="#3a3a3a" stroke-width="0.1">スタイル</text>
<text x="1014.8" y="87.22" font-size="13.3" fill="#242424" textLength="41" lengthAdjust="spacingAndGlyphs" stroke="#242424" stroke-width="0.12">行/列の</text>
<text x="1014.8" y="103.22" font-size="13.3" fill="#242424" textLength="42.7" lengthAdjust="spacingAndGlyphs" stroke="#242424" stroke-width="0.12">切り替え</text>
<text x="1066.5" y="87.22" font-size="13.3" fill="#242424" textLength="39.4" lengthAdjust="spacingAndGlyphs" stroke="#242424" stroke-width="0.12">データの</text>
<text x="1073.9" y="103.22" font-size="13.3" fill="#242424" textLength="24.6" lengthAdjust="spacingAndGlyphs" stroke="#242424" stroke-width="0.12">選択</text>
<text x="1130.5" y="87.22" font-size="13.3" fill="#242424" textLength="65" lengthAdjust="spacingAndGlyphs" stroke="#242424" stroke-width="0.12">グラフの種類</text>
<text x="1143.7" y="103.22" font-size="13.3" fill="#242424" textLength="35.3" lengthAdjust="spacingAndGlyphs" stroke="#242424" stroke-width="0.12">の変更</text>
<text x="1045" y="130.74" font-size="13" fill="#3a3a3a" textLength="29.7" lengthAdjust="spacingAndGlyphs" stroke="#3a3a3a" stroke-width="0.1">データ</text>
<text x="1149.4" y="130.74" font-size="13" fill="#3a3a3a" textLength="25" lengthAdjust="spacingAndGlyphs" stroke="#3a3a3a" stroke-width="0.1">種類</text>
</g>
<rect x="1214.1" y="35.8" width="44.3" height="81" fill="#f5f5f5" rx="4.5"/>
<g id="icon7">
<path d="M1221.8 42.3 H1251.2 V64 H1234.6 L1230.4 67.9 H1221.8 Z" fill="#fff"/>
<line x1="1231.8" y1="42.3" x2="1231.8" y2="63.4" stroke="#797775" stroke-width="1"/>
<line x1="1241.3" y1="42.3" x2="1241.3" y2="57" stroke="#797775" stroke-width="1"/>
<line x1="1221.8" y1="49.8" x2="1251.2" y2="49.8" stroke="#797775" stroke-width="1"/>
<line x1="1221.8" y1="57.1" x2="1251.2" y2="57.1" stroke="#797775" stroke-width="1"/>
<path d="M1251.2 57 V42.3 H1221.8 V67.9 H1230.4 L1234.6 63.4 H1221.8" fill="none" stroke="#3b3a39" stroke-width="1.2"/>
<path d="M1236 62.6 H1241.4 V55 H1249 V58.4 H1254.2 V72.7 H1236 Z" fill="#f5f5f5"/>
<rect x="1237.2" y="63.8" width="5.4" height="7.7" fill="#c8c6c4" stroke="#797775" stroke-width="1.1"/>
<rect x="1247.8" y="59.6" width="5.2" height="11.9" fill="#83beec" stroke="#1e6fc4" stroke-width="1.2"/>
<rect x="1242.6" y="56.2" width="5.2" height="15.3" fill="#fff" stroke="#3b3a39" stroke-width="1.1"/>
</g>
<text x="1217.6" y="87.22" font-size="13.3" fill="#242424" textLength="37.1" lengthAdjust="spacingAndGlyphs" stroke="#242424" stroke-width="0.12">グラフの</text>
<text x="1224.2" y="103.22" font-size="13.3" fill="#242424" textLength="24.4" lengthAdjust="spacingAndGlyphs" stroke="#242424" stroke-width="0.12">移動</text>
<text x="1224.2" y="130.74" font-size="13" fill="#3a3a3a" textLength="24.4" lengthAdjust="spacingAndGlyphs" stroke="#3a3a3a" stroke-width="0.1">場所</text>
<rect x="1195" y="21.2" width="82.8" height="118.2" fill="none" stroke="#f8781d" stroke-width="3.2"/>
<g id="fbar">
<text x="14.6" y="168.04" font-size="15.6" fill="#3a3a3a" textLength="42.9" lengthAdjust="spacingAndGlyphs">グラフ</text>
<text x="64.4" y="168.58" font-size="15.6" fill="#3a3a3a" textLength="6.6" lengthAdjust="spacingAndGlyphs">1</text>
<path d="M100.95 160.3 L105.7 164.9 L110.45 160.3" fill="none" stroke="#444" stroke-width="1.3" stroke-linecap="round" stroke-linejoin="round"/>
<circle cx="125.8" cy="157.2" r="1.25" fill="#3a3a3a"/>
<circle cx="125.8" cy="161.4" r="1.25" fill="#3a3a3a"/>
<circle cx="125.8" cy="165.6" r="1.25" fill="#3a3a3a"/>
<path d="M144.3 156.5 L156.3 168.5 M156.3 156.5 L144.3 168.5" stroke="#b5b5b5" stroke-width="1.1" fill="none"/>
<path d="M167.8 163.5 L172.8 168.3 L183.5 156.3" stroke="#b5b5b5" stroke-width="1.1" fill="none"/>
<text x="193.8" y="168.2" font-size="19.5" style="font-family:&quot;Liberation Serif&quot;,serif;font-style:italic;font-weight:bold" fill="#333" textLength="15" lengthAdjust="spacingAndGlyphs">fx</text>
<path d="M215.5 160.6 L219.5 164.6 L223.5 160.6" fill="none" stroke="#8a8a8a" stroke-width="1.1" stroke-linecap="round" stroke-linejoin="round"/>
</g>
<g id="sheet">
<rect x="0" y="183" width="1438" height="26" fill="#f0f0f0"/>
<rect x="0" y="209" width="30.5" height="522" fill="#f0f0f0"/>
<rect x="30.5" y="235.05" width="77.5" height="312.6" fill="#f8f2fd"/>
<rect x="108" y="209" width="232.5" height="26.05" fill="#ffeded"/>
<rect x="108" y="235.05" width="232.5" height="312.6" fill="#ebf3ff"/>
<line x1="108" y1="209" x2="108" y2="731" stroke="#e7e7e7" stroke-width="1"/>
<line x1="185.5" y1="209" x2="185.5" y2="731" stroke="#e7e7e7" stroke-width="1"/>
<line x1="263" y1="209" x2="263" y2="731" stroke="#e7e7e7" stroke-width="1"/>
<line x1="340.5" y1="209" x2="340.5" y2="731" stroke="#e7e7e7" stroke-width="1"/>
<line x1="418" y1="209" x2="418" y2="731" stroke="#e7e7e7" stroke-width="1"/>
<line x1="495.5" y1="209" x2="495.5" y2="731" stroke="#e7e7e7" stroke-width="1"/>
<line x1="573" y1="209" x2="573" y2="731" stroke="#e7e7e7" stroke-width="1"/>
<line x1="650.5" y1="209" x2="650.5" y2="731" stroke="#e7e7e7" stroke-width="1"/>
<line x1="728" y1="209" x2="728" y2="731" stroke="#e7e7e7" stroke-width="1"/>
<line x1="805.5" y1="209" x2="805.5" y2="731" stroke="#e7e7e7" stroke-width="1"/>
<line x1="883" y1="209" x2="883" y2="731" stroke="#e7e7e7" stroke-width="1"/>
<line x1="960.5" y1="209" x2="960.5" y2="731" stroke="#e7e7e7" stroke-width="1"/>
<line x1="1038" y1="209" x2="1038" y2="731" stroke="#e7e7e7" stroke-width="1"/>
<line x1="1115.5" y1="209" x2="1115.5" y2="731" stroke="#e7e7e7" stroke-width="1"/>
<line x1="1193" y1="209" x2="1193" y2="731" stroke="#e7e7e7" stroke-width="1"/>
<line x1="1270.5" y1="209" x2="1270.5" y2="731" stroke="#e7e7e7" stroke-width="1"/>
<line x1="1348" y1="209" x2="1348" y2="731" stroke="#e7e7e7" stroke-width="1"/>
<line x1="1425.5" y1="209" x2="1425.5" y2="731" stroke="#e7e7e7" stroke-width="1"/>
<line x1="1503" y1="209" x2="1503" y2="731" stroke="#e7e7e7" stroke-width="1"/>
<line x1="30.5" y1="235.05" x2="1438" y2="235.05" stroke="#e7e7e7" stroke-width="1"/>
<line x1="30.5" y1="261.1" x2="1438" y2="261.1" stroke="#e7e7e7" stroke-width="1"/>
<line x1="30.5" y1="287.15" x2="1438" y2="287.15" stroke="#e7e7e7" stroke-width="1"/>
<line x1="30.5" y1="313.2" x2="1438" y2="313.2" stroke="#e7e7e7" stroke-width="1"/>
<line x1="30.5" y1="339.25" x2="1438" y2="339.25" stroke="#e7e7e7" stroke-width="1"/>
<line x1="30.5" y1="365.3" x2="1438" y2="365.3" stroke="#e7e7e7" stroke-width="1"/>
<line x1="30.5" y1="391.35" x2="1438" y2="391.35" stroke="#e7e7e7" stroke-width="1"/>
<line x1="30.5" y1="417.4" x2="1438" y2="417.4" stroke="#e7e7e7" stroke-width="1"/>
<line x1="30.5" y1="443.45" x2="1438" y2="443.45" stroke="#e7e7e7" stroke-width="1"/>
<line x1="30.5" y1="469.5" x2="1438" y2="469.5" stroke="#e7e7e7" stroke-width="1"/>
<line x1="30.5" y1="495.55" x2="1438" y2="495.55" stroke="#e7e7e7" stroke-width="1"/>
<line x1="30.5" y1="521.6" x2="1438" y2="521.6" stroke="#e7e7e7" stroke-width="1"/>
<line x1="30.5" y1="547.65" x2="1438" y2="547.65" stroke="#e7e7e7" stroke-width="1"/>
<line x1="30.5" y1="573.7" x2="1438" y2="573.7" stroke="#e7e7e7" stroke-width="1"/>
<line x1="30.5" y1="599.75" x2="1438" y2="599.75" stroke="#e7e7e7" stroke-width="1"/>
<line x1="30.5" y1="625.8" x2="1438" y2="625.8" stroke="#e7e7e7" stroke-width="1"/>
<line x1="30.5" y1="651.85" x2="1438" y2="651.85" stroke="#e7e7e7" stroke-width="1"/>
<line x1="30.5" y1="677.9" x2="1438" y2="677.9" stroke="#e7e7e7" stroke-width="1"/>
<line x1="30.5" y1="703.95" x2="1438" y2="703.95" stroke="#e7e7e7" stroke-width="1"/>
<line x1="30.5" y1="730" x2="1438" y2="730" stroke="#e7e7e7" stroke-width="1"/>
<line x1="30.5" y1="183.5" x2="30.5" y2="209" stroke="#cfcfcf" stroke-width="1.1"/>
<line x1="108" y1="183.5" x2="108" y2="209" stroke="#cfcfcf" stroke-width="1.1"/>
<line x1="185.5" y1="183.5" x2="185.5" y2="209" stroke="#cfcfcf" stroke-width="1.1"/>
<line x1="263" y1="183.5" x2="263" y2="209" stroke="#cfcfcf" stroke-width="1.1"/>
<line x1="340.5" y1="183.5" x2="340.5" y2="209" stroke="#cfcfcf" stroke-width="1.1"/>
<line x1="418" y1="183.5" x2="418" y2="209" stroke="#cfcfcf" stroke-width="1.1"/>
<line x1="495.5" y1="183.5" x2="495.5" y2="209" stroke="#cfcfcf" stroke-width="1.1"/>
<line x1="573" y1="183.5" x2="573" y2="209" stroke="#cfcfcf" stroke-width="1.1"/>
<line x1="650.5" y1="183.5" x2="650.5" y2="209" stroke="#cfcfcf" stroke-width="1.1"/>
<line x1="728" y1="183.5" x2="728" y2="209" stroke="#cfcfcf" stroke-width="1.1"/>
<line x1="805.5" y1="183.5" x2="805.5" y2="209" stroke="#cfcfcf" stroke-width="1.1"/>
<line x1="883" y1="183.5" x2="883" y2="209" stroke="#cfcfcf" stroke-width="1.1"/>
<line x1="960.5" y1="183.5" x2="960.5" y2="209" stroke="#cfcfcf" stroke-width="1.1"/>
<line x1="1038" y1="183.5" x2="1038" y2="209" stroke="#cfcfcf" stroke-width="1.1"/>
<line x1="1115.5" y1="183.5" x2="1115.5" y2="209" stroke="#cfcfcf" stroke-width="1.1"/>
<line x1="1193" y1="183.5" x2="1193" y2="209" stroke="#cfcfcf" stroke-width="1.1"/>
<line x1="1270.5" y1="183.5" x2="1270.5" y2="209" stroke="#cfcfcf" stroke-width="1.1"/>
<line x1="1348" y1="183.5" x2="1348" y2="209" stroke="#cfcfcf" stroke-width="1.1"/>
<line x1="1425.5" y1="183.5" x2="1425.5" y2="209" stroke="#cfcfcf" stroke-width="1.1"/>
<line x1="1503" y1="183.5" x2="1503" y2="209" stroke="#cfcfcf" stroke-width="1.1"/>
<line x1="0" y1="235.05" x2="30.5" y2="235.05" stroke="#cfcfcf" stroke-width="1.1"/>
<line x1="0" y1="261.1" x2="30.5" y2="261.1" stroke="#cfcfcf" stroke-width="1.1"/>
<line x1="0" y1="287.15" x2="30.5" y2="287.15" stroke="#cfcfcf" stroke-width="1.1"/>
<line x1="0" y1="313.2" x2="30.5" y2="313.2" stroke="#cfcfcf" stroke-width="1.1"/>
<line x1="0" y1="339.25" x2="30.5" y2="339.25" stroke="#cfcfcf" stroke-width="1.1"/>
<line x1="0" y1="365.3" x2="30.5" y2="365.3" stroke="#cfcfcf" stroke-width="1.1"/>
<line x1="0" y1="391.35" x2="30.5" y2="391.35" stroke="#cfcfcf" stroke-width="1.1"/>
<line x1="0" y1="417.4" x2="30.5" y2="417.4" stroke="#cfcfcf" stroke-width="1.1"/>
<line x1="0" y1="443.45" x2="30.5" y2="443.45" stroke="#cfcfcf" stroke-width="1.1"/>
<line x1="0" y1="469.5" x2="30.5" y2="469.5" stroke="#cfcfcf" stroke-width="1.1"/>
<line x1="0" y1="495.55" x2="30.5" y2="495.55" stroke="#cfcfcf" stroke-width="1.1"/>
<line x1="0" y1="521.6" x2="30.5" y2="521.6" stroke="#cfcfcf" stroke-width="1.1"/>
<line x1="0" y1="547.65" x2="30.5" y2="547.65" stroke="#cfcfcf" stroke-width="1.1"/>
<line x1="0" y1="573.7" x2="30.5" y2="573.7" stroke="#cfcfcf" stroke-width="1.1"/>
<line x1="0" y1="599.75" x2="30.5" y2="599.75" stroke="#cfcfcf" stroke-width="1.1"/>
<line x1="0" y1="625.8" x2="30.5" y2="625.8" stroke="#cfcfcf" stroke-width="1.1"/>
<line x1="0" y1="651.85" x2="30.5" y2="651.85" stroke="#cfcfcf" stroke-width="1.1"/>
<line x1="0" y1="677.9" x2="30.5" y2="677.9" stroke="#cfcfcf" stroke-width="1.1"/>
<line x1="0" y1="703.95" x2="30.5" y2="703.95" stroke="#cfcfcf" stroke-width="1.1"/>
<line x1="0" y1="730" x2="30.5" y2="730" stroke="#cfcfcf" stroke-width="1.1"/>
<line x1="30.2" y1="209" x2="30.2" y2="731" stroke="#c6c6c6" stroke-width="1.2"/>
<line x1="0" y1="208.9" x2="1438" y2="208.9" stroke="#c6c6c6" stroke-width="1.5"/>
<path d="M28.4 186.7 V206.7 H7.8 Z" fill="#b9b9b9"/>
<text transform="translate(69.25 201.3) scale(1 1.12)" font-size="15" fill="#333" text-anchor="middle">A</text>
<text transform="translate(146.75 201.3) scale(1 1.12)" font-size="15" fill="#333" text-anchor="middle">B</text>
<text transform="translate(224.25 201.3) scale(1 1.12)" font-size="15" fill="#333" text-anchor="middle">C</text>
<text transform="translate(301.75 201.3) scale(1 1.12)" font-size="15" fill="#333" text-anchor="middle">D</text>
<text transform="translate(379.25 201.3) scale(1 1.12)" font-size="15" fill="#333" text-anchor="middle">E</text>
<text transform="translate(456.75 201.3) scale(1 1.12)" font-size="15" fill="#333" text-anchor="middle">F</text>
<text transform="translate(534.25 201.3) scale(1 1.12)" font-size="15" fill="#333" text-anchor="middle">G</text>
<text transform="translate(611.75 201.3) scale(1 1.12)" font-size="15" fill="#333" text-anchor="middle">H</text>
<text transform="translate(689.25 201.3) scale(1 1.12)" font-size="15" fill="#333" text-anchor="middle">I</text>
<text transform="translate(766.75 201.3) scale(1 1.12)" font-size="15" fill="#333" text-anchor="middle">J</text>
<text transform="translate(844.25 201.3) scale(1 1.12)" font-size="15" fill="#333" text-anchor="middle">K</text>
<text transform="translate(921.75 201.3) scale(1 1.12)" font-size="15" fill="#333" text-anchor="middle">L</text>
<text transform="translate(999.25 201.3) scale(1 1.12)" font-size="15" fill="#333" text-anchor="middle">M</text>
<text transform="translate(1076.75 201.3) scale(1 1.12)" font-size="15" fill="#333" text-anchor="middle">N</text>
<text transform="translate(1154.25 201.3) scale(1 1.12)" font-size="15" fill="#333" text-anchor="middle">O</text>
<text transform="translate(1231.75 201.3) scale(1 1.12)" font-size="15" fill="#333" text-anchor="middle">P</text>
<text transform="translate(1309.25 201.3) scale(1 1.12)" font-size="15" fill="#333" text-anchor="middle">Q</text>
<text transform="translate(1386.75 201.3) scale(1 1.12)" font-size="15" fill="#333" text-anchor="middle">R</text>
<text transform="translate(1464.25 201.3) scale(1 1.12)" font-size="15" fill="#333" text-anchor="middle">S</text>
<text transform="translate(15.2 227.62) scale(1 1.15)" font-size="15" fill="#333" text-anchor="middle">1</text>
<text transform="translate(15.2 253.68) scale(1 1.15)" font-size="15" fill="#333" text-anchor="middle">2</text>
<text transform="translate(15.2 279.73) scale(1 1.15)" font-size="15" fill="#333" text-anchor="middle">3</text>
<text transform="translate(15.2 305.77) scale(1 1.15)" font-size="15" fill="#333" text-anchor="middle">4</text>
<text transform="translate(15.2 331.83) scale(1 1.15)" font-size="15" fill="#333" text-anchor="middle">5</text>
<text transform="translate(15.2 357.88) scale(1 1.15)" font-size="15" fill="#333" text-anchor="middle">6</text>
<text transform="translate(15.2 383.93) scale(1 1.15)" font-size="15" fill="#333" text-anchor="middle">7</text>
<text transform="translate(15.2 409.98) scale(1 1.15)" font-size="15" fill="#333" text-anchor="middle">8</text>
<text transform="translate(15.2 436.03) scale(1 1.15)" font-size="15" fill="#333" text-anchor="middle">9</text>
<text transform="translate(15.2 462.08) scale(1 1.15)" font-size="15" fill="#333" text-anchor="middle">10</text>
<text transform="translate(15.2 488.12) scale(1 1.15)" font-size="15" fill="#333" text-anchor="middle">11</text>
<text transform="translate(15.2 514.18) scale(1 1.15)" font-size="15" fill="#333" text-anchor="middle">12</text>
<text transform="translate(15.2 540.23) scale(1 1.15)" font-size="15" fill="#333" text-anchor="middle">13</text>
<text transform="translate(15.2 566.28) scale(1 1.15)" font-size="15" fill="#333" text-anchor="middle">14</text>
<text transform="translate(15.2 592.33) scale(1 1.15)" font-size="15" fill="#333" text-anchor="middle">15</text>
<text transform="translate(15.2 618.38) scale(1 1.15)" font-size="15" fill="#333" text-anchor="middle">16</text>
<text transform="translate(15.2 644.43) scale(1 1.15)" font-size="15" fill="#333" text-anchor="middle">17</text>
<text transform="translate(15.2 670.48) scale(1 1.15)" font-size="15" fill="#333" text-anchor="middle">18</text>
<text transform="translate(15.2 696.53) scale(1 1.15)" font-size="15" fill="#333" text-anchor="middle">19</text>
<text transform="translate(15.2 722.58) scale(1 1.15)" font-size="15" fill="#333" text-anchor="middle">20</text>
<text x="62.2" y="227.33" font-size="16.2" fill="#111" font-weight="bold" textLength="14.2" lengthAdjust="spacingAndGlyphs">月</text>
<text x="126.25" y="227.33" font-size="16.2" fill="#111" font-weight="bold" textLength="41" lengthAdjust="spacingAndGlyphs">商品A</text>
<text x="203.75" y="227.33" font-size="16.2" fill="#111" font-weight="bold" textLength="41" lengthAdjust="spacingAndGlyphs">商品B</text>
<text x="281.25" y="227.33" font-size="16.2" fill="#111" font-weight="bold" textLength="41" lengthAdjust="spacingAndGlyphs">商品C</text>
<text font-size="14.7" fill="#2a2a2a"><tspan x="33.7" y="253.43" font-size="16.4" textLength="8.08" lengthAdjust="spacingAndGlyphs">1</tspan><tspan x="41.08" y="253.38" font-size="16.2" textLength="15.6" lengthAdjust="spacingAndGlyphs">月</tspan></text>
<text x="166.54" y="253.4" font-size="16.4" fill="#2a2a2a" textLength="16.16" lengthAdjust="spacingAndGlyphs">90</text>
<text x="244.04" y="253.4" font-size="16.4" fill="#2a2a2a" textLength="16.16" lengthAdjust="spacingAndGlyphs">62</text>
<text x="321.54" y="253.4" font-size="16.4" fill="#2a2a2a" textLength="16.16" lengthAdjust="spacingAndGlyphs">55</text>
<text font-size="14.7" fill="#2a2a2a"><tspan x="33.7" y="279.48" font-size="16.4" textLength="8.08" lengthAdjust="spacingAndGlyphs">2</tspan><tspan x="41.08" y="279.43" font-size="16.2" textLength="15.6" lengthAdjust="spacingAndGlyphs">月</tspan></text>
<text x="166.54" y="279.45" font-size="16.4" fill="#2a2a2a" textLength="16.16" lengthAdjust="spacingAndGlyphs">75</text>
<text x="244.04" y="279.45" font-size="16.4" fill="#2a2a2a" textLength="16.16" lengthAdjust="spacingAndGlyphs">68</text>
<text x="321.54" y="279.45" font-size="16.4" fill="#2a2a2a" textLength="16.16" lengthAdjust="spacingAndGlyphs">50</text>
<text font-size="14.7" fill="#2a2a2a"><tspan x="33.7" y="305.52" font-size="16.4" textLength="8.08" lengthAdjust="spacingAndGlyphs">3</tspan><tspan x="41.08" y="305.47" font-size="16.2" textLength="15.6" lengthAdjust="spacingAndGlyphs">月</tspan></text>
<text x="158.46" y="305.5" font-size="16.4" fill="#2a2a2a" textLength="24.24" lengthAdjust="spacingAndGlyphs">110</text>
<text x="244.04" y="305.5" font-size="16.4" fill="#2a2a2a" textLength="16.16" lengthAdjust="spacingAndGlyphs">85</text>
<text x="321.54" y="305.5" font-size="16.4" fill="#2a2a2a" textLength="16.16" lengthAdjust="spacingAndGlyphs">78</text>
<text font-size="14.7" fill="#2a2a2a"><tspan x="33.7" y="331.58" font-size="16.4" textLength="8.08" lengthAdjust="spacingAndGlyphs">4</tspan><tspan x="41.08" y="331.53" font-size="16.2" textLength="15.6" lengthAdjust="spacingAndGlyphs">月</tspan></text>
<text x="158.46" y="331.55" font-size="16.4" fill="#2a2a2a" textLength="24.24" lengthAdjust="spacingAndGlyphs">120</text>
<text x="244.04" y="331.55" font-size="16.4" fill="#2a2a2a" textLength="16.16" lengthAdjust="spacingAndGlyphs">92</text>
<text x="321.54" y="331.55" font-size="16.4" fill="#2a2a2a" textLength="16.16" lengthAdjust="spacingAndGlyphs">70</text>
<text font-size="14.7" fill="#2a2a2a"><tspan x="33.7" y="357.62" font-size="16.4" textLength="8.08" lengthAdjust="spacingAndGlyphs">5</tspan><tspan x="41.08" y="357.57" font-size="16.2" textLength="15.6" lengthAdjust="spacingAndGlyphs">月</tspan></text>
<text x="158.46" y="357.6" font-size="16.4" fill="#2a2a2a" textLength="24.24" lengthAdjust="spacingAndGlyphs">145</text>
<text x="235.96" y="357.6" font-size="16.4" fill="#2a2a2a" textLength="24.24" lengthAdjust="spacingAndGlyphs">105</text>
<text x="321.54" y="357.6" font-size="16.4" fill="#2a2a2a" textLength="16.16" lengthAdjust="spacingAndGlyphs">95</text>
<text font-size="14.7" fill="#2a2a2a"><tspan x="33.7" y="383.68" font-size="16.4" textLength="8.08" lengthAdjust="spacingAndGlyphs">6</tspan><tspan x="41.08" y="383.63" font-size="16.2" textLength="15.6" lengthAdjust="spacingAndGlyphs">月</tspan></text>
<text x="158.46" y="383.65" font-size="16.4" fill="#2a2a2a" textLength="24.24" lengthAdjust="spacingAndGlyphs">135</text>
<text x="235.96" y="383.65" font-size="16.4" fill="#2a2a2a" textLength="24.24" lengthAdjust="spacingAndGlyphs">112</text>
<text x="321.54" y="383.65" font-size="16.4" fill="#2a2a2a" textLength="16.16" lengthAdjust="spacingAndGlyphs">88</text>
<text font-size="14.7" fill="#2a2a2a"><tspan x="33.7" y="409.73" font-size="16.4" textLength="8.08" lengthAdjust="spacingAndGlyphs">7</tspan><tspan x="41.08" y="409.68" font-size="16.2" textLength="15.6" lengthAdjust="spacingAndGlyphs">月</tspan></text>
<text x="158.46" y="409.7" font-size="16.4" fill="#2a2a2a" textLength="24.24" lengthAdjust="spacingAndGlyphs">125</text>
<text x="244.04" y="409.7" font-size="16.4" fill="#2a2a2a" textLength="16.16" lengthAdjust="spacingAndGlyphs">98</text>
<text x="321.54" y="409.7" font-size="16.4" fill="#2a2a2a" textLength="16.16" lengthAdjust="spacingAndGlyphs">92</text>
<text font-size="14.7" fill="#2a2a2a"><tspan x="33.7" y="435.78" font-size="16.4" textLength="8.08" lengthAdjust="spacingAndGlyphs">8</tspan><tspan x="41.08" y="435.73" font-size="16.2" textLength="15.6" lengthAdjust="spacingAndGlyphs">月</tspan></text>
<text x="158.46" y="435.75" font-size="16.4" fill="#2a2a2a" textLength="24.24" lengthAdjust="spacingAndGlyphs">130</text>
<text x="235.96" y="435.75" font-size="16.4" fill="#2a2a2a" textLength="24.24" lengthAdjust="spacingAndGlyphs">115</text>
<text x="313.46" y="435.75" font-size="16.4" fill="#2a2a2a" textLength="24.24" lengthAdjust="spacingAndGlyphs">100</text>
<text font-size="14.7" fill="#2a2a2a"><tspan x="33.7" y="461.83" font-size="16.4" textLength="8.08" lengthAdjust="spacingAndGlyphs">9</tspan><tspan x="41.08" y="461.78" font-size="16.2" textLength="15.6" lengthAdjust="spacingAndGlyphs">月</tspan></text>
<text x="158.46" y="461.8" font-size="16.4" fill="#2a2a2a" textLength="24.24" lengthAdjust="spacingAndGlyphs">155</text>
<text x="235.96" y="461.8" font-size="16.4" fill="#2a2a2a" textLength="24.24" lengthAdjust="spacingAndGlyphs">125</text>
<text x="313.46" y="461.8" font-size="16.4" fill="#2a2a2a" textLength="24.24" lengthAdjust="spacingAndGlyphs">118</text>
<text font-size="14.7" fill="#2a2a2a"><tspan x="33.7" y="487.88" font-size="16.4" textLength="16.16" lengthAdjust="spacingAndGlyphs">10</tspan><tspan x="49.16" y="487.82" font-size="16.2" textLength="15.6" lengthAdjust="spacingAndGlyphs">月</tspan></text>
<text x="158.46" y="487.85" font-size="16.4" fill="#2a2a2a" textLength="24.24" lengthAdjust="spacingAndGlyphs">175</text>
<text x="235.96" y="487.85" font-size="16.4" fill="#2a2a2a" textLength="24.24" lengthAdjust="spacingAndGlyphs">160</text>
<text x="313.46" y="487.85" font-size="16.4" fill="#2a2a2a" textLength="24.24" lengthAdjust="spacingAndGlyphs">130</text>
<text font-size="14.7" fill="#2a2a2a"><tspan x="33.7" y="513.93" font-size="16.4" textLength="16.16" lengthAdjust="spacingAndGlyphs">11</tspan><tspan x="49.16" y="513.88" font-size="16.2" textLength="15.6" lengthAdjust="spacingAndGlyphs">月</tspan></text>
<text x="158.46" y="513.9" font-size="16.4" fill="#2a2a2a" textLength="24.24" lengthAdjust="spacingAndGlyphs">168</text>
<text x="235.96" y="513.9" font-size="16.4" fill="#2a2a2a" textLength="24.24" lengthAdjust="spacingAndGlyphs">148</text>
<text x="313.46" y="513.9" font-size="16.4" fill="#2a2a2a" textLength="24.24" lengthAdjust="spacingAndGlyphs">135</text>
<text font-size="14.7" fill="#2a2a2a"><tspan x="33.7" y="539.97" font-size="16.4" textLength="16.16" lengthAdjust="spacingAndGlyphs">12</tspan><tspan x="49.16" y="539.92" font-size="16.2" textLength="15.6" lengthAdjust="spacingAndGlyphs">月</tspan></text>
<text x="158.46" y="539.95" font-size="16.4" fill="#2a2a2a" textLength="24.24" lengthAdjust="spacingAndGlyphs">195</text>
<text x="235.96" y="539.95" font-size="16.4" fill="#2a2a2a" textLength="24.24" lengthAdjust="spacingAndGlyphs">182</text>
<text x="313.46" y="539.95" font-size="16.4" fill="#2a2a2a" textLength="24.24" lengthAdjust="spacingAndGlyphs">160</text>
<line x1="30.5" y1="235.25" x2="108" y2="235.25" stroke="#b57bff" stroke-width="1.25"/>
<line x1="108" y1="235.05" x2="108" y2="547.65" stroke="#b57bff" stroke-width="1.25"/>
<line x1="30.5" y1="547.65" x2="108" y2="547.65" stroke="#b57bff" stroke-width="1.25"/>
<line x1="108" y1="209" x2="108" y2="235.05" stroke="#ff5a64" stroke-width="1.4"/>
<line x1="108" y1="235.35" x2="340.5" y2="235.35" stroke="#ff5a64" stroke-width="1.4"/>
<line x1="340.5" y1="209" x2="340.5" y2="235.05" stroke="#ff5a64" stroke-width="1.4"/>
<line x1="340.5" y1="235.05" x2="340.5" y2="547.65" stroke="#6a9cf3" stroke-width="1.5"/>
<line x1="108" y1="547.65" x2="340.5" y2="547.65" stroke="#6a9cf3" stroke-width="1.5"/>
<rect x="106.4" y="233.65" width="3.2" height="3.2" fill="#b57bff"/>
<rect x="106.4" y="546.05" width="3.2" height="3.2" fill="#b57bff"/>
<rect x="338.9" y="546.05" width="3.2" height="3.2" fill="#6a9cf3"/>
<rect x="338.9" y="233.65" width="3.2" height="3.2" fill="#ff5a64"/>
<rect x="106.6" y="208.8" width="2.8" height="2.2" fill="#ff5a64"/>
<rect x="339.1" y="208.8" width="2.8" height="2.2" fill="#ff5a64"/>
</g>
<g id="chart">
<rect x="524.4" y="408.5" width="509.8" height="305.3" fill="#fff" stroke="#595959" stroke-width="1.3"/>
<text x="709.8" y="441.31" font-size="18.7" fill="#595959" textLength="54.8" lengthAdjust="spacingAndGlyphs">グラフ</text>
<text x="774.4" y="441.31" font-size="18.7" fill="#595959" textLength="75.1" lengthAdjust="spacingAndGlyphs">タイトル</text>
<line x1="565.8" y1="608.4" x2="1017.8" y2="608.4" stroke="#d9d9d9" stroke-width="1"/>
<line x1="565.8" y1="573.8" x2="1017.8" y2="573.8" stroke="#d9d9d9" stroke-width="1"/>
<line x1="565.8" y1="539.2" x2="1017.8" y2="539.2" stroke="#d9d9d9" stroke-width="1"/>
<line x1="565.8" y1="504.6" x2="1017.8" y2="504.6" stroke="#d9d9d9" stroke-width="1"/>
<line x1="565.8" y1="470" x2="1017.8" y2="470" stroke="#d9d9d9" stroke-width="1"/>
<line x1="565.8" y1="643" x2="1017.8" y2="643" stroke="#d0d0d0" stroke-width="1"/>
<text x="547.1" y="647.52" font-size="12" fill="#595959" textLength="6.2" lengthAdjust="spacingAndGlyphs">0</text>
<text x="540.9" y="612.92" font-size="12" fill="#595959" textLength="12.4" lengthAdjust="spacingAndGlyphs">50</text>
<text x="534.7" y="578.32" font-size="12" fill="#595959" textLength="18.6" lengthAdjust="spacingAndGlyphs">100</text>
<text x="534.7" y="543.72" font-size="12" fill="#595959" textLength="18.6" lengthAdjust="spacingAndGlyphs">150</text>
<text x="534.7" y="509.12" font-size="12" fill="#595959" textLength="18.6" lengthAdjust="spacingAndGlyphs">200</text>
<text x="534.7" y="474.52" font-size="12" fill="#595959" textLength="18.6" lengthAdjust="spacingAndGlyphs">250</text>
<rect x="572.13" y="580.72" width="6.5" height="62.28" fill="#5b9bd5"/>
<rect x="580.68" y="600.1" width="6.5" height="42.9" fill="#ed7d31"/>
<rect x="589.23" y="604.94" width="6.5" height="38.06" fill="#a5a5a5"/>
<text x="574.73" y="666.12" font-size="12" fill="#595959" textLength="17.8" lengthAdjust="spacingAndGlyphs">1月</text>
<rect x="609.9" y="591.1" width="6.5" height="51.9" fill="#5b9bd5"/>
<rect x="618.45" y="595.94" width="6.5" height="47.06" fill="#ed7d31"/>
<rect x="627" y="608.4" width="6.5" height="34.6" fill="#a5a5a5"/>
<text x="612.5" y="666.12" font-size="12" fill="#595959" textLength="17.8" lengthAdjust="spacingAndGlyphs">2月</text>
<rect x="647.66" y="566.88" width="6.5" height="76.12" fill="#5b9bd5"/>
<rect x="656.21" y="584.18" width="6.5" height="58.82" fill="#ed7d31"/>
<rect x="664.76" y="589.02" width="6.5" height="53.98" fill="#a5a5a5"/>
<text x="650.26" y="666.12" font-size="12" fill="#595959" textLength="17.8" lengthAdjust="spacingAndGlyphs">3月</text>
<rect x="685.43" y="559.96" width="6.5" height="83.04" fill="#5b9bd5"/>
<rect x="693.98" y="579.34" width="6.5" height="63.66" fill="#ed7d31"/>
<rect x="702.53" y="594.56" width="6.5" height="48.44" fill="#a5a5a5"/>
<text x="688.03" y="666.12" font-size="12" fill="#595959" textLength="17.8" lengthAdjust="spacingAndGlyphs">4月</text>
<rect x="723.19" y="542.66" width="6.5" height="100.34" fill="#5b9bd5"/>
<rect x="731.74" y="570.34" width="6.5" height="72.66" fill="#ed7d31"/>
<rect x="740.29" y="577.26" width="6.5" height="65.74" fill="#a5a5a5"/>
<text x="725.79" y="666.12" font-size="12" fill="#595959" textLength="17.8" lengthAdjust="spacingAndGlyphs">5月</text>
<rect x="760.96" y="549.58" width="6.5" height="93.42" fill="#5b9bd5"/>
<rect x="769.51" y="565.5" width="6.5" height="77.5" fill="#ed7d31"/>
<rect x="778.06" y="582.1" width="6.5" height="60.9" fill="#a5a5a5"/>
<text x="763.56" y="666.12" font-size="12" fill="#595959" textLength="17.8" lengthAdjust="spacingAndGlyphs">6月</text>
<rect x="798.72" y="556.5" width="6.5" height="86.5" fill="#5b9bd5"/>
<rect x="807.27" y="575.18" width="6.5" height="67.82" fill="#ed7d31"/>
<rect x="815.82" y="579.34" width="6.5" height="63.66" fill="#a5a5a5"/>
<text x="801.32" y="666.12" font-size="12" fill="#595959" textLength="17.8" lengthAdjust="spacingAndGlyphs">7月</text>
<rect x="836.49" y="553.04" width="6.5" height="89.96" fill="#5b9bd5"/>
<rect x="845.04" y="563.42" width="6.5" height="79.58" fill="#ed7d31"/>
<rect x="853.59" y="573.8" width="6.5" height="69.2" fill="#a5a5a5"/>
<text x="839.09" y="666.12" font-size="12" fill="#595959" textLength="17.8" lengthAdjust="spacingAndGlyphs">8月</text>
<rect x="874.25" y="535.74" width="6.5" height="107.26" fill="#5b9bd5"/>
<rect x="882.8" y="556.5" width="6.5" height="86.5" fill="#ed7d31"/>
<rect x="891.35" y="561.34" width="6.5" height="81.66" fill="#a5a5a5"/>
<text x="876.85" y="666.12" font-size="12" fill="#595959" textLength="17.8" lengthAdjust="spacingAndGlyphs">9月</text>
<rect x="912.02" y="521.9" width="6.5" height="121.1" fill="#5b9bd5"/>
<rect x="920.57" y="532.28" width="6.5" height="110.72" fill="#ed7d31"/>
<rect x="929.12" y="553.04" width="6.5" height="89.96" fill="#a5a5a5"/>
<text x="911.52" y="666.12" font-size="12" fill="#595959" textLength="24" lengthAdjust="spacingAndGlyphs">10月</text>
<rect x="949.78" y="526.74" width="6.5" height="116.26" fill="#5b9bd5"/>
<rect x="958.33" y="540.58" width="6.5" height="102.42" fill="#ed7d31"/>
<rect x="966.88" y="549.58" width="6.5" height="93.42" fill="#a5a5a5"/>
<text x="949.28" y="666.12" font-size="12" fill="#595959" textLength="24" lengthAdjust="spacingAndGlyphs">11月</text>
<rect x="987.55" y="508.06" width="6.5" height="134.94" fill="#5b9bd5"/>
<rect x="996.1" y="517.06" width="6.5" height="125.94" fill="#ed7d31"/>
<rect x="1004.65" y="532.28" width="6.5" height="110.72" fill="#a5a5a5"/>
<text x="987.05" y="666.12" font-size="12" fill="#595959" textLength="24" lengthAdjust="spacingAndGlyphs">12月</text>
<rect x="707.4" y="689.9" width="7" height="7" fill="#5b9bd5"/>
<text x="717.8" y="697.46" font-size="12" fill="#595959" textLength="31.9" lengthAdjust="spacingAndGlyphs">商品A</text>
<rect x="760.9" y="689.9" width="7" height="7" fill="#ed7d31"/>
<text x="771.3" y="697.46" font-size="12" fill="#595959" textLength="31.9" lengthAdjust="spacingAndGlyphs">商品B</text>
<rect x="814.4" y="689.9" width="7" height="7" fill="#a5a5a5"/>
<text x="824.8" y="697.46" font-size="12" fill="#595959" textLength="31.9" lengthAdjust="spacingAndGlyphs">商品C</text>
<circle cx="524.4" cy="408.5" r="5.0" fill="#fff" stroke="#444" stroke-width="1.7"/>
<circle cx="779.2" cy="408.5" r="5.0" fill="#fff" stroke="#444" stroke-width="1.7"/>
<circle cx="1034.2" cy="408.5" r="5.0" fill="#fff" stroke="#444" stroke-width="1.7"/>
<circle cx="524.4" cy="561.5" r="5.0" fill="#fff" stroke="#444" stroke-width="1.7"/>
<circle cx="1034.2" cy="561.5" r="5.0" fill="#fff" stroke="#444" stroke-width="1.7"/>
<circle cx="524.4" cy="713.8" r="5.0" fill="#fff" stroke="#444" stroke-width="1.7"/>
<circle cx="779.2" cy="713.8" r="5.0" fill="#fff" stroke="#444" stroke-width="1.7"/>
<circle cx="1034.2" cy="713.8" r="5.0" fill="#fff" stroke="#444" stroke-width="1.7"/>
<rect x="1046.55" y="408.9" width="28.3" height="28.9" fill="#fff" stroke="#595959" stroke-width="1.15"/>
<rect x="1046.55" y="448.9" width="28.3" height="28.9" fill="#fff" stroke="#595959" stroke-width="1.15"/>
<rect x="1046.55" y="488.8" width="28.3" height="28.9" fill="#fff" stroke="#595959" stroke-width="1.15"/>
<path d="M1050 422.5 H1069 M1059.5 413 V432" stroke="#33a867" stroke-width="1.1" fill="none"/>
<path d="M1069.8 454.2 C1071.2 455.2 1070.6 456.6 1069.6 457.8 L1061.4 467.6 L1058.6 465.2 L1067 455.4 C1068 454.2 1069 453.6 1069.8 454.2 Z" fill="#fff" stroke="#444" stroke-width="1.0"/>
<path d="M1058.4 465.0 L1061.4 467.6 C1061.4 470.6 1057.6 472.6 1049.8 471.2 C1053.2 470.4 1054 468.6 1054.6 467.0 C1055.2 465.2 1057 464.4 1058.4 465.0 Z" fill="#6aaae8" stroke="#3a86d6" stroke-width="0.6"/>
<path d="M1050.2 493.5 H1069.2 V495.2 L1061.8 504.8 V512.8 H1057.6 V504.8 L1050.2 495.2 Z" fill="#fff" stroke="#444" stroke-width="1.1" stroke-linejoin="round"/>
</g>
</svg>
<div id="tip" class="abs"></div>
<svg id="tiptext" width="1438" height="731" viewBox="0 0 1438 731">
<text x="1226.6" y="158.64" font-size="13" fill="#2e2e2e" font-weight="bold" textLength="65.7" lengthAdjust="spacingAndGlyphs">グラフの移動</text>
<text x="1226.6" y="180.23" font-size="12.6" fill="#5e5e5e" textLength="176.4" lengthAdjust="spacingAndGlyphs">このグラフをブック内の別のシートまた</text>
<text x="1226.6" y="196.13" font-size="12.6" fill="#5e5e5e" textLength="99.9" lengthAdjust="spacingAndGlyphs">はタブに移動します。</text>
</svg>
</div>
</body>
</html>
